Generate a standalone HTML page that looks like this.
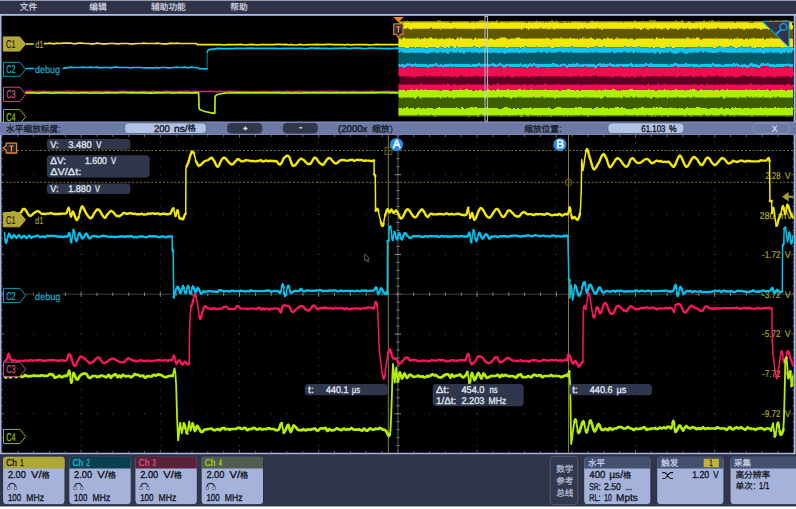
<!DOCTYPE html><html><head><meta charset="utf-8"><title>scope</title><style>html,body{margin:0;padding:0;background:#000;overflow:hidden}svg{display:block}text{font-family:"Liberation Sans","Noto Sans CJK SC",sans-serif;text-rendering:geometricPrecision}</style></head><body><svg width="796" height="509" viewBox="0 0 796 509"><defs>
<filter id="bl" x="-1%" y="-5%" width="102%" height="110%"><feTurbulence type="fractalNoise" baseFrequency="0.3 0.07" numOctaves="2" seed="4" result="n"/><feDisplacementMap in="SourceGraphic" in2="n" scale="3.2" xChannelSelector="R" yChannelSelector="G"/><feGaussianBlur stdDeviation="0.5 0.7"/></filter>
<clipPath id="mc"><rect x="1.5" y="134.9" width="792.2" height="317.85"/></clipPath>
<clipPath id="ovc"><rect x="1.7" y="16" width="792" height="105.7"/></clipPath>
</defs>
<rect x="0.00" y="0.00" width="796.00" height="509.00" fill="#abb8e4" />
<rect x="795.20" y="14.00" width="0.80" height="441.00" fill="#6a78a0" />
<rect x="0.00" y="13.90" width="796.00" height="2.00" fill="#adbbe8" />
<rect x="0.00" y="0.00" width="796.00" height="14.00" fill="#2e3349" />
<rect x="0.00" y="0.00" width="796.00" height="0.90" fill="#a9a9b3" />
<rect x="1.50" y="15.80" width="792.20" height="106.00" fill="#000" />
<rect x="0.00" y="121.80" width="796.00" height="13.00" fill="#6c7aa4" />
<rect x="1.50" y="134.90" width="792.20" height="317.85" fill="#000" />
<rect x="0.00" y="454.20" width="796.00" height="52.40" fill="#313549" />
<rect x="0.00" y="506.60" width="796.00" height="2.40" fill="#ffffff" />
<text x="19.80" y="10.30" font-size="8.7" fill="#cfd2df" text-anchor="start" stroke="#cfd2df" stroke-width="0.25" textLength="17.4" lengthAdjust="spacingAndGlyphs">文件</text>
<text x="89.30" y="10.30" font-size="8.7" fill="#cfd2df" text-anchor="start" stroke="#cfd2df" stroke-width="0.25" textLength="17.4" lengthAdjust="spacingAndGlyphs">编辑</text>
<text x="151.00" y="10.30" font-size="8.7" fill="#cfd2df" text-anchor="start" stroke="#cfd2df" stroke-width="0.25" textLength="34.8" lengthAdjust="spacingAndGlyphs">辅助功能</text>
<text x="230.20" y="10.30" font-size="8.7" fill="#cfd2df" text-anchor="start" stroke="#cfd2df" stroke-width="0.25" textLength="17.4" lengthAdjust="spacingAndGlyphs">帮助</text>
<g filter="url(#bl)">
<rect x="398.40" y="21.60" width="394.60" height="7.30" fill="#f2e900" />
<rect x="398.40" y="28.90" width="394.60" height="9.50" fill="#5f5800" />
<rect x="398.40" y="38.40" width="394.60" height="8.90" fill="#f2e900" />
<rect x="398.40" y="47.30" width="394.60" height="5.60" fill="#12c2ee" />
<rect x="398.40" y="52.90" width="394.60" height="10.80" fill="#005a6a" />
<rect x="398.40" y="63.70" width="394.60" height="3.50" fill="#12c2ee" />
<rect x="398.40" y="67.20" width="394.60" height="9.60" fill="#f20a52" />
<rect x="398.40" y="76.80" width="394.60" height="7.60" fill="#5c0022" />
<rect x="398.40" y="84.40" width="394.60" height="5.50" fill="#f20a52" />
<rect x="398.40" y="89.90" width="394.60" height="7.90" fill="#aaf000" />
<rect x="398.40" y="97.80" width="394.60" height="10.20" fill="#3c5e00" />
<rect x="398.40" y="108.00" width="394.60" height="7.70" fill="#aaf000" />
</g>
<rect x="398.40" y="21.20" width="394.60" height="1.20" fill="#8d8700" />
<rect x="398.40" y="115.20" width="394.60" height="1.20" fill="#5c8600" />
<polyline points="26.5,44.0 29.5,44.0 33.0,44.0" fill="none" stroke="#f4ea00" stroke-width="1.7" stroke-linejoin="round" stroke-linecap="round" />
<polyline points="44.5,43.6 47.5,43.5 49.6,43.2 51.7,43.5 53.8,43.8 56.8,43.2 58.9,43.5 63.1,43.2 66.1,43.2 70.3,43.2 72.4,43.5 74.5,43.8 78.7,43.2 81.7,43.2 84.7,43.5 88.9,43.5 91.0,43.8 94.0,43.8 97.0,43.2 100.0,43.5 102.1,43.8 104.2,43.8 106.3,43.8 109.3,43.5 113.5,43.5 117.7,43.8 121.9,43.5 124.9,43.5 127.9,43.5 130.0,43.8 133.0,43.8 137.2,43.5 141.4,43.5 143.5,43.2 147.7,43.5 150.7,43.5 154.9,43.5 157.0,43.2 160.0,43.5 163.0,43.8 167.2,43.8 171.4,43.2 173.5,43.5 177.7,43.2 179.8,43.5 184.0,43.5 188.2,43.5 190.3,43.5 193.3,43.5 195.4,43.5 196.0,43.5 197.5,44.7 200.5,44.7 203.5,44.7 206.5,44.7 210.7,44.7 212.8,44.7 217.0,44.7 220.0,44.7 224.2,45.0 227.2,44.7 230.2,44.7 233.2,44.7 235.3,44.7 238.3,44.7 241.3,44.4 245.5,45.0 248.5,44.7 251.5,44.4 254.5,44.7 257.5,45.0 260.5,44.7 262.6,44.7 266.8,44.7 271.0,44.7 273.1,44.7 277.3,44.4 280.3,44.4 283.3,44.7 286.3,44.4 289.3,45.0 291.4,44.4 293.5,45.0 296.5,45.0 298.6,44.7 300.7,44.4 303.7,45.0 307.9,44.7 310.9,44.7 313.9,44.7 316.0,44.4 320.2,44.7 324.4,44.7 327.4,44.4 330.4,44.4 333.4,44.7 337.6,44.7 339.7,44.7 342.7,44.7 344.8,45.0 347.8,44.4 350.8,45.0 353.8,44.7 356.8,44.7 359.8,44.7 362.8,44.7 367.0,44.7 370.0,45.0 374.2,44.7 376.3,44.4 379.3,44.7 382.3,44.7 385.3,44.7 388.3,44.7 390.4,44.7 392.5,44.7 396.7,44.7 398.4,44.7" fill="none" stroke="#f4ea00" stroke-width="1.7" stroke-linejoin="round" stroke-linecap="round" />
<polyline points="26.5,68.5 29.5,68.5 33.5,68.5" fill="none" stroke="#00c4f0" stroke-width="1.7" stroke-linejoin="round" stroke-linecap="round" />
<polyline points="63.4,68.4 66.4,67.8 68.5,67.5 71.5,67.2 73.6,67.5 76.6,67.5 79.6,67.5 82.6,67.2 86.8,67.5 91.0,67.2 94.0,67.5 97.0,67.2 100.0,67.8 104.2,67.5 108.4,67.5 111.4,67.8 114.4,67.2 116.5,67.2 119.5,67.5 122.5,67.5 124.6,67.5 127.6,67.5 130.6,67.8 133.6,67.5 137.8,67.5 139.9,67.5 144.1,67.8 148.3,67.8 151.3,67.8 154.3,67.8 156.4,67.5 159.4,67.8 161.5,67.5 164.5,67.5 168.7,67.8 170.8,67.8 172.9,67.5 177.1,67.2 179.2,67.5 182.2,67.5 184.3,67.2 188.5,67.8 190.6,67.2 194.8,67.5 197.0,67.5 199.0,68.7 207.0,68.9" fill="none" stroke="#00c4f0" stroke-width="1.7" stroke-linejoin="round" stroke-linecap="round" />
<polyline points="207.3,52.0 208.0,50.3 210.0,49.4 215.0,48.8 218.0,48.4 222.2,48.7 226.4,48.7 229.4,48.7 232.4,48.7 235.4,48.4 238.4,48.4 240.5,48.4 244.7,48.4 246.8,48.4 251.0,48.1 254.0,48.4 256.1,48.4 259.1,48.4 262.1,48.4 266.3,48.4 268.4,48.4 272.6,48.4 275.6,48.4 279.8,48.7 284.0,48.4 288.2,48.4 291.2,48.4 293.3,48.4 295.4,48.4 299.6,48.4 301.7,48.4 304.7,48.7 307.7,48.7 309.8,48.1 312.8,48.1 314.9,48.4 317.9,48.1 320.9,48.4 323.9,48.4 326.9,48.4 329.9,48.7 334.1,48.4 336.2,48.4 338.3,48.4 342.5,48.1 345.5,48.1 347.6,48.4 349.7,48.7 352.7,48.1 355.7,48.1 359.9,48.1 362.9,48.7 367.1,48.4 370.1,48.1 373.1,48.1 376.1,48.4 378.2,48.4 381.2,48.4 384.2,48.7 387.2,48.4 391.4,48.7 394.4,48.4 397.4,48.1 398.4,48.4" fill="none" stroke="#00c4f0" stroke-width="1.7" stroke-linejoin="round" stroke-linecap="round" />
<polyline points="207.0,68.9 207.3,52.0" fill="none" stroke="#00c4f0" stroke-width="0.7" stroke-linejoin="round" stroke-linecap="round" stroke-linecap="butt"/>
<polyline points="26.0,91.4 29.0,91.2 31.1,91.2 34.1,91.8 38.3,91.5 42.5,91.2 46.7,91.5 50.9,91.8 53.9,91.5 56.9,91.5 59.9,91.5 64.1,91.5 66.2,91.5 68.3,91.2 71.3,91.5 74.3,91.2 76.4,91.5 79.4,91.8 82.4,91.5 84.5,91.5 87.5,91.5 90.5,91.5 92.6,91.5 95.6,91.5 98.6,91.5 100.7,91.5 103.7,91.5 106.7,91.2 109.7,91.5 111.8,91.5 114.8,91.8 117.8,91.5 119.9,91.2 122.9,91.2 125.9,91.5 128.0,91.5 130.1,91.5 133.1,91.5 135.2,91.8 138.2,91.8 142.4,91.5 146.6,91.5 149.6,91.8 152.6,91.2 156.8,91.8 159.8,91.8 161.9,91.8 164.9,91.2 167.0,91.2 170.0,91.5 172.1,91.5 176.3,91.8 178.4,91.2 181.4,91.5 184.4,91.2 188.6,91.2 190.7,91.8 192.8,91.5 195.8,91.2 198.8,91.5 201.8,91.5 206.0,91.5 210.2,91.2 214.4,91.5 216.5,91.8 219.5,91.2 222.5,91.5 225.5,91.5 228.5,91.2 232.7,91.2 236.9,91.5 239.0,91.5 243.2,91.5 246.2,91.5 250.4,91.5 252.5,91.8 255.5,91.5 257.6,91.5 259.7,91.5 263.9,91.2 268.1,91.5 272.3,91.5 275.3,91.2 277.4,91.5 280.4,91.5 283.4,91.8 286.4,91.2 289.4,91.5 293.6,91.5 297.8,91.2 300.8,91.2 305.0,91.5 309.2,91.5 312.2,91.5 315.2,91.5 318.2,91.2 321.2,91.2 324.2,91.5 328.4,91.2 331.4,91.2 334.4,91.5 337.4,91.2 341.6,91.5 343.7,91.5 347.9,91.5 350.0,91.5 352.1,91.2 355.1,91.5 358.1,91.5 362.3,91.8 365.3,91.5 368.3,91.5 370.4,91.5 373.4,91.2 375.5,91.5 379.7,91.8 382.7,91.5 386.9,91.2 389.9,91.5 394.1,91.5 397.1,91.5 398.4,91.5" fill="none" stroke="#ff1464" stroke-width="1.5" stroke-linejoin="round" stroke-linecap="round" />
<polyline points="26.0,92.9 29.0,92.9 32.0,92.9 35.0,92.9 39.2,93.2 43.4,92.6 46.4,92.9 48.5,92.9 52.7,93.2 55.7,92.9 58.7,92.9 62.9,92.9 65.9,92.9 68.0,92.9 71.0,93.2 73.1,92.9 76.1,92.9 79.1,93.2 82.1,92.6 86.3,92.9 90.5,93.2 93.5,92.9 96.5,92.9 98.6,92.9 101.6,93.2 104.6,92.9 107.6,92.6 110.6,92.9 114.8,92.9 119.0,92.9 122.0,92.6 125.0,92.6 129.2,92.9 133.4,92.6 135.5,92.9 139.7,92.9 142.7,92.6 145.7,92.9 148.7,93.2 150.8,92.9 152.9,93.2 155.0,92.6 158.0,92.9 160.1,92.9 163.1,92.9 167.3,92.6 169.4,92.6 172.4,93.2 175.4,92.9 178.4,92.9 180.5,92.6 183.5,92.9 186.5,92.9 189.5,92.9 192.5,93.2 195.5,92.6 198.6,92.9 199.1,108.0 200.0,109.8 205.0,111.5 210.0,112.6 214.8,113.4 215.1,97.0 216.0,95.2 219.0,94.0 225.0,93.2 228.0,92.9 230.1,92.6 233.1,92.9 237.3,92.6 240.3,92.9 244.5,92.9 247.5,92.9 249.6,92.9 253.8,92.9 258.0,92.9 260.1,92.9 262.2,92.9 266.4,92.9 269.4,92.9 272.4,92.9 275.4,92.9 278.4,92.6 282.6,93.2 285.6,92.9 289.8,92.9 291.9,93.2 294.9,92.9 297.0,92.9 299.1,93.2 302.1,92.9 304.2,92.6 307.2,92.9 311.4,92.9 313.5,92.6 316.5,92.9 319.5,92.9 323.7,92.6 326.7,92.9 329.7,92.9 333.9,92.9 336.0,92.6 338.1,92.9 340.2,92.9 344.4,92.6 347.4,92.9 350.4,92.9 354.6,92.6 356.7,92.9 359.7,92.9 363.9,92.9 366.9,92.9 371.1,92.6 375.3,92.9 379.5,92.6 383.7,92.6 387.9,92.6 390.0,92.9 393.0,92.6 396.0,92.9 398.4,92.9" fill="none" stroke="#b4f000" stroke-width="1.7" stroke-linejoin="round" stroke-linecap="round" />
<text x="35.30" y="47.70" font-size="10.3" fill="#b9ad1c" text-anchor="start"  stroke="#b9ad1c" stroke-width="0.15" textLength="8.1" lengthAdjust="spacingAndGlyphs">d1</text>
<text x="35.00" y="73.30" font-size="10.3" fill="#1fb4d6" text-anchor="start"  stroke="#1fb4d6" stroke-width="0.15" textLength="25.1" lengthAdjust="spacingAndGlyphs">debug</text>
<path d="M3.3,36.9 H19.7 L25.5,44.0 L19.7,51.1 H3.3 Z" fill="#b3a837" stroke="#b3a837" stroke-width="1"/>
<text x="6.10" y="48.10" font-size="11.3" fill="#1d1b08" text-anchor="start"  stroke="#1d1b08" stroke-width="0.2" textLength="9.4" lengthAdjust="spacingAndGlyphs">C1</text>
<path d="M3.5,62.3 H19.9 L25.7,69.3 L19.9,76.3 H3.5 Z" fill="#000" stroke="#0a9cba" stroke-width="1"/>
<text x="6.30" y="73.45" font-size="11.3" fill="#12b4d6" text-anchor="start"  stroke="#12b4d6" stroke-width="0.2" textLength="9.4" lengthAdjust="spacingAndGlyphs">C2</text>
<path d="M3.5,87.2 H19.9 L25.7,94.3 L19.9,101.4 H3.5 Z" fill="#000" stroke="#cf4b78" stroke-width="1"/>
<text x="6.30" y="98.45" font-size="11.3" fill="#d85885" text-anchor="start"  stroke="#d85885" stroke-width="0.2" textLength="9.4" lengthAdjust="spacingAndGlyphs">C3</text>
<g clip-path="url(#ovc)">
<path d="M3.5,109.6 H19.9 L25.7,116.7 L19.9,123.8 H3.5 Z" fill="#000" stroke="#8fbc00" stroke-width="1"/>
<text x="6.30" y="120.80" font-size="11.3" fill="#9ccc00" text-anchor="start"  stroke="#9ccc00" stroke-width="0.2" textLength="9.4" lengthAdjust="spacingAndGlyphs">C4</text>
</g>
<rect x="485.00" y="16.60" width="2.60" height="104.60" fill="none" stroke="#c9cbd6" stroke-width="0.9"/>
<path d="M393.3,17.1 H403.7 L398.5,22.2 Z" fill="#f08a1e"/>
<path d="M393.7,23.8 H403 V34.4 H400.6 L398.4,37.6 L396.2,34.4 H393.7 Z" fill="#2a2b3e" stroke="#dc7c20" stroke-width="1.2" stroke-linejoin="round"/>
<path d="M396.2,26.8 H400.7 M398.45,26.8 V32.2" stroke="#f0902a" stroke-width="1.2" fill="none"/>
<path d="M762.3,21.4 H789 V47.2 Z" fill="#2f3449" stroke="#2196dc" stroke-width="1.1" stroke-linejoin="round"/>
<circle cx="783.4" cy="26.9" r="3.4" fill="none" stroke="#2196dc" stroke-width="1.5"/>
<line x1="780.70" y1="29.70" x2="776.00" y2="34.30" stroke="#2196dc" stroke-width="2" stroke-linecap="round"/>
<rect x="0.00" y="121.80" width="796.00" height="0.80" fill="#8c9bc8" />
<rect x="0.00" y="134.10" width="796.00" height="0.70" fill="#8090bc" />
<text x="6.00" y="131.70" font-size="8.72" fill="#14151e" text-anchor="start" stroke="#14151e" stroke-width="0.25" textLength="52.3" lengthAdjust="spacingAndGlyphs">水平缩放标度</text>
<text x="58.60" y="131.50" font-size="9.7" fill="#14151e" text-anchor="start"  stroke="#14151e" stroke-width="0.35" textLength="2.0" lengthAdjust="spacingAndGlyphs">:</text>
<rect x="124.60" y="122.90" width="81.80" height="10.60" fill="#b1c4e5" rx="4" stroke="#4c5470" stroke-width="0.7"/>
<text x="153.90" y="131.50" font-size="9.7" fill="#14151e" text-anchor="start"  stroke="#14151e" stroke-width="0.35" textLength="15.9" lengthAdjust="spacingAndGlyphs">200</text>
<text x="173.90" y="131.50" font-size="9.7" fill="#14151e" text-anchor="start"  stroke="#14151e" stroke-width="0.35" textLength="13.8" lengthAdjust="spacingAndGlyphs">ns/</text>
<text x="187.60" y="131.40" font-size="8.4" fill="#14151e" text-anchor="start" stroke="#14151e" stroke-width="0.25">格</text>
<rect x="227.20" y="123.00" width="35.10" height="10.40" fill="#30364c" rx="4" stroke="#4c5470" stroke-width="0.6"/>
<rect x="282.90" y="123.00" width="35.00" height="10.40" fill="#30364c" rx="4" stroke="#4c5470" stroke-width="0.6"/>
<path d="M243.3,128.5 h4.2 M245.4,126.4 v4.2" stroke="#e2e4ee" stroke-width="1.3" fill="none"/>
<path d="M299.2,127.8 h3" stroke="#e2e4ee" stroke-width="1.3" fill="none"/>
<text x="338.00" y="131.50" font-size="9.7" fill="#14151e" text-anchor="start"  stroke="#14151e" stroke-width="0.35" textLength="29.4" lengthAdjust="spacingAndGlyphs">(2000x</text>
<text x="372.00" y="131.60" font-size="8.8" fill="#14151e" text-anchor="start" stroke="#14151e" stroke-width="0.25" textLength="17.6" lengthAdjust="spacingAndGlyphs">缩放</text>
<text x="389.80" y="131.50" font-size="9.7" fill="#14151e" text-anchor="start" >)</text>
<text x="524.20" y="131.70" font-size="8.7" fill="#14151e" text-anchor="start" stroke="#14151e" stroke-width="0.25" textLength="34.8" lengthAdjust="spacingAndGlyphs">缩放位置</text>
<text x="559.40" y="131.50" font-size="9.7" fill="#14151e" text-anchor="start"  stroke="#14151e" stroke-width="0.35" textLength="2.0" lengthAdjust="spacingAndGlyphs">:</text>
<rect x="607.80" y="122.90" width="76.20" height="10.60" fill="#b1c4e5" rx="4" stroke="#4c5470" stroke-width="0.7"/>
<text x="641.30" y="131.50" font-size="9.7" fill="#14151e" text-anchor="start"  stroke="#14151e" stroke-width="0.35" textLength="24.2" lengthAdjust="spacingAndGlyphs">61.103</text>
<text x="669.00" y="131.50" font-size="9.7" fill="#14151e" text-anchor="start"  stroke="#14151e" stroke-width="0.35" textLength="7.6" lengthAdjust="spacingAndGlyphs">%</text>
<rect x="753.60" y="123.00" width="35.70" height="10.40" fill="none" rx="4.5" stroke="#8b97bd" stroke-width="0.9"/>
<text x="774.60" y="131.80" font-size="9.4" fill="#eef0f8" text-anchor="middle" >X</text>
<g clip-path="url(#mc)">
<line x1="81.14" y1="134.30" x2="81.14" y2="454.10" stroke="#4a4a4a" stroke-width="1" stroke-dasharray="1 6.970"/>
<line x1="160.33" y1="134.30" x2="160.33" y2="454.10" stroke="#4a4a4a" stroke-width="1" stroke-dasharray="1 6.970"/>
<line x1="239.52" y1="134.30" x2="239.52" y2="454.10" stroke="#4a4a4a" stroke-width="1" stroke-dasharray="1 6.970"/>
<line x1="318.71" y1="134.30" x2="318.71" y2="454.10" stroke="#4a4a4a" stroke-width="1" stroke-dasharray="1 6.970"/>
<line x1="477.09" y1="134.30" x2="477.09" y2="454.10" stroke="#4a4a4a" stroke-width="1" stroke-dasharray="1 6.970"/>
<line x1="556.28" y1="134.30" x2="556.28" y2="454.10" stroke="#4a4a4a" stroke-width="1" stroke-dasharray="1 6.970"/>
<line x1="635.47" y1="134.30" x2="635.47" y2="454.10" stroke="#4a4a4a" stroke-width="1" stroke-dasharray="1 6.970"/>
<line x1="714.66" y1="134.30" x2="714.66" y2="454.10" stroke="#4a4a4a" stroke-width="1" stroke-dasharray="1 6.970"/>
<line x1="1.45" y1="174.65" x2="794.35" y2="174.65" stroke="#4a4a4a" stroke-width="1" stroke-dasharray="1 14.838"/>
<line x1="1.45" y1="214.50" x2="794.35" y2="214.50" stroke="#4a4a4a" stroke-width="1" stroke-dasharray="1 14.838"/>
<line x1="1.45" y1="254.35" x2="794.35" y2="254.35" stroke="#4a4a4a" stroke-width="1" stroke-dasharray="1 14.838"/>
<line x1="1.45" y1="334.05" x2="794.35" y2="334.05" stroke="#4a4a4a" stroke-width="1" stroke-dasharray="1 14.838"/>
<line x1="1.45" y1="373.90" x2="794.35" y2="373.90" stroke="#4a4a4a" stroke-width="1" stroke-dasharray="1 14.838"/>
<line x1="1.45" y1="413.75" x2="794.35" y2="413.75" stroke="#4a4a4a" stroke-width="1" stroke-dasharray="1 14.838"/>
<line x1="397.90" y1="134.80" x2="397.90" y2="453.60" stroke="#6e6e6e" stroke-width="0.85" />
<path d="M394.7,134.8L401.1,134.8M394.7,174.7L401.1,174.7M394.7,214.5L401.1,214.5M394.7,254.4L401.1,254.4M394.7,294.2L401.1,294.2M394.7,334.1L401.1,334.1M394.7,373.9L401.1,373.9M394.7,413.8L401.1,413.8M394.7,453.6L401.1,453.6" stroke="#909090" stroke-width="1" fill="none"/>
<path d="M396.1,142.8L399.7,142.8M396.1,150.7L399.7,150.7M396.1,158.7L399.7,158.7M396.1,166.7L399.7,166.7M396.1,182.6L399.7,182.6M396.1,190.6L399.7,190.6M396.1,198.6L399.7,198.6M396.1,206.5L399.7,206.5M396.1,222.5L399.7,222.5M396.1,230.4L399.7,230.4M396.1,238.4L399.7,238.4M396.1,246.4L399.7,246.4M396.1,262.3L399.7,262.3M396.1,270.3L399.7,270.3M396.1,278.3L399.7,278.3M396.1,286.2L399.7,286.2M396.1,302.2L399.7,302.2M396.1,310.1L399.7,310.1M396.1,318.1L399.7,318.1M396.1,326.1L399.7,326.1M396.1,342.0L399.7,342.0M396.1,350.0L399.7,350.0M396.1,358.0L399.7,358.0M396.1,365.9L399.7,365.9M396.1,381.9L399.7,381.9M396.1,389.8L399.7,389.8M396.1,397.8L399.7,397.8M396.1,405.8L399.7,405.8M396.1,421.7L399.7,421.7M396.1,429.7L399.7,429.7M396.1,437.7L399.7,437.7M396.1,445.6L399.7,445.6" stroke="#747474" stroke-width="1" fill="none"/>
<line x1="1.95" y1="294.20" x2="793.85" y2="294.20" stroke="#444444" stroke-width="0.9" />
<path d="M1.9,291.6L1.9,296.8M17.8,292.6L17.8,295.8M33.6,292.6L33.6,295.8M49.5,292.6L49.5,295.8M65.3,292.6L65.3,295.8M81.1,291.6L81.1,296.8M97.0,292.6L97.0,295.8M112.8,292.6L112.8,295.8M128.7,292.6L128.7,295.8M144.5,292.6L144.5,295.8M160.3,291.6L160.3,296.8M176.2,292.6L176.2,295.8M192.0,292.6L192.0,295.8M207.8,292.6L207.8,295.8M223.7,292.6L223.7,295.8M239.5,291.6L239.5,296.8M255.4,292.6L255.4,295.8M271.2,292.6L271.2,295.8M287.0,292.6L287.0,295.8M302.9,292.6L302.9,295.8M318.7,291.6L318.7,296.8M334.5,292.6L334.5,295.8M350.4,292.6L350.4,295.8M366.2,292.6L366.2,295.8M382.1,292.6L382.1,295.8M397.9,291.6L397.9,296.8M413.7,292.6L413.7,295.8M429.6,292.6L429.6,295.8M445.4,292.6L445.4,295.8M461.3,292.6L461.3,295.8M477.1,291.6L477.1,296.8M492.9,292.6L492.9,295.8M508.8,292.6L508.8,295.8M524.6,292.6L524.6,295.8M540.4,292.6L540.4,295.8M556.3,291.6L556.3,296.8M572.1,292.6L572.1,295.8M588.0,292.6L588.0,295.8M603.8,292.6L603.8,295.8M619.6,292.6L619.6,295.8M635.5,291.6L635.5,296.8M651.3,292.6L651.3,295.8M667.1,292.6L667.1,295.8M683.0,292.6L683.0,295.8M698.8,292.6L698.8,295.8M714.7,291.6L714.7,296.8M730.5,292.6L730.5,295.8M746.3,292.6L746.3,295.8M762.2,292.6L762.2,295.8M778.0,292.6L778.0,295.8M793.9,291.6L793.9,296.8" stroke="#8a8a8a" stroke-width="1" fill="none"/>
<path d="M1.9,134.9L1.9,137.5M1.9,450.1L1.9,452.8M17.8,134.9L17.8,136.8M17.8,450.9L17.8,452.8M33.6,134.9L33.6,136.8M33.6,450.9L33.6,452.8M49.5,134.9L49.5,136.8M49.5,450.9L49.5,452.8M65.3,134.9L65.3,136.8M65.3,450.9L65.3,452.8M81.1,134.9L81.1,137.5M81.1,450.1L81.1,452.8M97.0,134.9L97.0,136.8M97.0,450.9L97.0,452.8M112.8,134.9L112.8,136.8M112.8,450.9L112.8,452.8M128.7,134.9L128.7,136.8M128.7,450.9L128.7,452.8M144.5,134.9L144.5,136.8M144.5,450.9L144.5,452.8M160.3,134.9L160.3,137.5M160.3,450.1L160.3,452.8M176.2,134.9L176.2,136.8M176.2,450.9L176.2,452.8M192.0,134.9L192.0,136.8M192.0,450.9L192.0,452.8M207.8,134.9L207.8,136.8M207.8,450.9L207.8,452.8M223.7,134.9L223.7,136.8M223.7,450.9L223.7,452.8M239.5,134.9L239.5,137.5M239.5,450.1L239.5,452.8M255.4,134.9L255.4,136.8M255.4,450.9L255.4,452.8M271.2,134.9L271.2,136.8M271.2,450.9L271.2,452.8M287.0,134.9L287.0,136.8M287.0,450.9L287.0,452.8M302.9,134.9L302.9,136.8M302.9,450.9L302.9,452.8M318.7,134.9L318.7,137.5M318.7,450.1L318.7,452.8M334.5,134.9L334.5,136.8M334.5,450.9L334.5,452.8M350.4,134.9L350.4,136.8M350.4,450.9L350.4,452.8M366.2,134.9L366.2,136.8M366.2,450.9L366.2,452.8M382.1,134.9L382.1,136.8M382.1,450.9L382.1,452.8M397.9,134.9L397.9,137.5M397.9,450.1L397.9,452.8M413.7,134.9L413.7,136.8M413.7,450.9L413.7,452.8M429.6,134.9L429.6,136.8M429.6,450.9L429.6,452.8M445.4,134.9L445.4,136.8M445.4,450.9L445.4,452.8M461.3,134.9L461.3,136.8M461.3,450.9L461.3,452.8M477.1,134.9L477.1,137.5M477.1,450.1L477.1,452.8M492.9,134.9L492.9,136.8M492.9,450.9L492.9,452.8M508.8,134.9L508.8,136.8M508.8,450.9L508.8,452.8M524.6,134.9L524.6,136.8M524.6,450.9L524.6,452.8M540.4,134.9L540.4,136.8M540.4,450.9L540.4,452.8M556.3,134.9L556.3,137.5M556.3,450.1L556.3,452.8M572.1,134.9L572.1,136.8M572.1,450.9L572.1,452.8M588.0,134.9L588.0,136.8M588.0,450.9L588.0,452.8M603.8,134.9L603.8,136.8M603.8,450.9L603.8,452.8M619.6,134.9L619.6,136.8M619.6,450.9L619.6,452.8M635.5,134.9L635.5,137.5M635.5,450.1L635.5,452.8M651.3,134.9L651.3,136.8M651.3,450.9L651.3,452.8M667.1,134.9L667.1,136.8M667.1,450.9L667.1,452.8M683.0,134.9L683.0,136.8M683.0,450.9L683.0,452.8M698.8,134.9L698.8,136.8M698.8,450.9L698.8,452.8M714.7,134.9L714.7,137.5M714.7,450.1L714.7,452.8M730.5,134.9L730.5,136.8M730.5,450.9L730.5,452.8M746.3,134.9L746.3,136.8M746.3,450.9L746.3,452.8M762.2,134.9L762.2,136.8M762.2,450.9L762.2,452.8M778.0,134.9L778.0,136.8M778.0,450.9L778.0,452.8M793.9,134.9L793.9,137.5M793.9,450.1L793.9,452.8M1.5,134.8L3.9,134.8M791.3,134.8L793.7,134.8M1.5,142.8L2.9,142.8M792.3,142.8L793.7,142.8M1.5,150.7L2.9,150.7M792.3,150.7L793.7,150.7M1.5,158.7L2.9,158.7M792.3,158.7L793.7,158.7M1.5,166.7L2.9,166.7M792.3,166.7L793.7,166.7M1.5,174.7L3.9,174.7M791.3,174.7L793.7,174.7M1.5,182.6L2.9,182.6M792.3,182.6L793.7,182.6M1.5,190.6L2.9,190.6M792.3,190.6L793.7,190.6M1.5,198.6L2.9,198.6M792.3,198.6L793.7,198.6M1.5,206.5L2.9,206.5M792.3,206.5L793.7,206.5M1.5,214.5L3.9,214.5M791.3,214.5L793.7,214.5M1.5,222.5L2.9,222.5M792.3,222.5L793.7,222.5M1.5,230.4L2.9,230.4M792.3,230.4L793.7,230.4M1.5,238.4L2.9,238.4M792.3,238.4L793.7,238.4M1.5,246.4L2.9,246.4M792.3,246.4L793.7,246.4M1.5,254.4L3.9,254.4M791.3,254.4L793.7,254.4M1.5,262.3L2.9,262.3M792.3,262.3L793.7,262.3M1.5,270.3L2.9,270.3M792.3,270.3L793.7,270.3M1.5,278.3L2.9,278.3M792.3,278.3L793.7,278.3M1.5,286.2L2.9,286.2M792.3,286.2L793.7,286.2M1.5,294.2L3.9,294.2M791.3,294.2L793.7,294.2M1.5,302.2L2.9,302.2M792.3,302.2L793.7,302.2M1.5,310.1L2.9,310.1M792.3,310.1L793.7,310.1M1.5,318.1L2.9,318.1M792.3,318.1L793.7,318.1M1.5,326.1L2.9,326.1M792.3,326.1L793.7,326.1M1.5,334.1L3.9,334.1M791.3,334.1L793.7,334.1M1.5,342.0L2.9,342.0M792.3,342.0L793.7,342.0M1.5,350.0L2.9,350.0M792.3,350.0L793.7,350.0M1.5,358.0L2.9,358.0M792.3,358.0L793.7,358.0M1.5,365.9L2.9,365.9M792.3,365.9L793.7,365.9M1.5,373.9L3.9,373.9M791.3,373.9L793.7,373.9M1.5,381.9L2.9,381.9M792.3,381.9L793.7,381.9M1.5,389.8L2.9,389.8M792.3,389.8L793.7,389.8M1.5,397.8L2.9,397.8M792.3,397.8L793.7,397.8M1.5,405.8L2.9,405.8M792.3,405.8L793.7,405.8M1.5,413.8L3.9,413.8M791.3,413.8L793.7,413.8M1.5,421.7L2.9,421.7M792.3,421.7L793.7,421.7M1.5,429.7L2.9,429.7M792.3,429.7L793.7,429.7M1.5,437.7L2.9,437.7M792.3,437.7L793.7,437.7M1.5,445.6L2.9,445.6M792.3,445.6L793.7,445.6M1.5,453.6L3.9,453.6M791.3,453.6L793.7,453.6" stroke="#6c6c6c" stroke-width="1" fill="none"/>
<line x1="1.95" y1="150.50" x2="793.85" y2="150.50" stroke="#939024" stroke-width="0.85" stroke-dasharray="1.9 1.93"/>
<line x1="1.95" y1="182.30" x2="793.85" y2="182.30" stroke="#939024" stroke-width="0.85" stroke-dasharray="1.9 1.93"/>
<line x1="388.30" y1="134.80" x2="388.30" y2="453.60" stroke="#887d1c" stroke-width="1" />
<line x1="568.50" y1="134.80" x2="568.50" y2="453.60" stroke="#887d1c" stroke-width="1" />
</g>
<text x="765.40" y="178.90" font-size="9.8" fill="#b8ac2e" text-anchor="start"  stroke="#b8ac2e" stroke-width="0.15" textLength="15.2" lengthAdjust="spacingAndGlyphs">2.28</text>
<text x="784.80" y="178.90" font-size="9.8" fill="#b8ac2e" text-anchor="start"  stroke="#b8ac2e" stroke-width="0.15" textLength="5.9" lengthAdjust="spacingAndGlyphs">V</text>
<text x="762.00" y="258.30" font-size="9.8" fill="#b8ac2e" text-anchor="start"  stroke="#b8ac2e" stroke-width="0.15" textLength="18.6" lengthAdjust="spacingAndGlyphs">-1.72</text>
<text x="784.80" y="258.30" font-size="9.8" fill="#b8ac2e" text-anchor="start"  stroke="#b8ac2e" stroke-width="0.15" textLength="5.9" lengthAdjust="spacingAndGlyphs">V</text>
<text x="762.00" y="297.80" font-size="9.8" fill="#b8ac2e" text-anchor="start"  stroke="#b8ac2e" stroke-width="0.15" textLength="18.6" lengthAdjust="spacingAndGlyphs">-3.72</text>
<text x="784.80" y="297.80" font-size="9.8" fill="#b8ac2e" text-anchor="start"  stroke="#b8ac2e" stroke-width="0.15" textLength="5.9" lengthAdjust="spacingAndGlyphs">V</text>
<text x="762.00" y="337.40" font-size="9.8" fill="#b8ac2e" text-anchor="start"  stroke="#b8ac2e" stroke-width="0.15" textLength="18.6" lengthAdjust="spacingAndGlyphs">-5.72</text>
<text x="784.80" y="337.40" font-size="9.8" fill="#b8ac2e" text-anchor="start"  stroke="#b8ac2e" stroke-width="0.15" textLength="5.9" lengthAdjust="spacingAndGlyphs">V</text>
<text x="762.00" y="377.00" font-size="9.8" fill="#b8ac2e" text-anchor="start"  stroke="#b8ac2e" stroke-width="0.15" textLength="18.6" lengthAdjust="spacingAndGlyphs">-7.72</text>
<text x="784.80" y="377.00" font-size="9.8" fill="#b8ac2e" text-anchor="start"  stroke="#b8ac2e" stroke-width="0.15" textLength="5.9" lengthAdjust="spacingAndGlyphs">V</text>
<text x="762.00" y="416.60" font-size="9.8" fill="#b8ac2e" text-anchor="start"  stroke="#b8ac2e" stroke-width="0.15" textLength="18.6" lengthAdjust="spacingAndGlyphs">-9.72</text>
<text x="784.80" y="416.60" font-size="9.8" fill="#b8ac2e" text-anchor="start"  stroke="#b8ac2e" stroke-width="0.15" textLength="5.9" lengthAdjust="spacingAndGlyphs">V</text>
<text x="759.40" y="218.70" font-size="9.8" fill="#b8ac2e" text-anchor="start"  stroke="#b8ac2e" stroke-width="0.15" textLength="15.2" lengthAdjust="spacingAndGlyphs">280</text>
<text x="778.00" y="218.70" font-size="9.8" fill="#b8ac2e" text-anchor="start"  stroke="#b8ac2e" stroke-width="0.15" textLength="15" lengthAdjust="spacingAndGlyphs">mV</text>
<g clip-path="url(#mc)">
<polyline points="5.0,360.7 6.0,360.2 7.0,359.1 7.8,355.8 8.6,353.6 9.6,356.1 10.5,359.1 11.2,359.9 12.0,360.7 13.0,360.5 14.0,360.3 14.7,360.3 15.4,360.3 16.4,360.9 17.4,361.4 18.3,360.8 19.3,360.5 20.2,360.9 21.2,360.9 22.2,360.9 23.1,360.9 24.1,360.9 25.0,360.4 25.7,360.4 26.4,360.4 27.4,360.7 28.4,361.0 29.4,360.7 30.4,360.0 31.4,360.2 32.4,361.0 33.1,360.7 33.8,360.4 34.8,360.4 35.8,360.4 36.7,360.4 37.7,360.4 38.6,360.0 39.5,360.0 40.5,360.0 41.4,360.4 42.4,360.4 43.4,360.9 44.1,360.9 44.8,360.9 45.7,360.9 46.7,360.4 47.6,360.4 48.6,360.1 49.6,359.9 50.6,360.1 51.6,360.4 52.3,360.0 53.0,360.0 54.0,360.0 55.0,360.4 55.9,360.4 56.9,360.4 57.8,360.9 58.5,361.1 59.2,360.5 60.2,360.3 61.2,360.4 62.2,360.1 63.2,360.3 63.9,360.6 64.6,360.9 65.3,360.9 66.0,360.9 66.8,359.9 67.6,357.7 68.4,355.1 69.2,354.1 70.1,354.5 71.0,356.7 71.9,360.1 72.8,362.9 73.7,365.1 74.6,366.0 75.5,365.9 76.4,363.6 77.3,361.7 78.3,360.1 79.2,358.2 80.1,356.8 81.0,356.3 82.0,356.9 83.0,357.5 83.9,357.8 84.9,358.7 85.9,359.8 86.9,360.8 87.9,361.7 88.8,362.5 89.8,363.5 90.8,362.8 91.8,362.5 92.7,361.8 93.7,361.4 94.6,360.3 95.5,359.2 96.5,358.3 97.5,357.6 98.4,357.4 99.3,357.8 100.2,358.9 101.1,360.3 102.0,361.7 102.9,362.8 103.8,363.2 104.8,363.0 105.7,362.6 106.7,362.0 107.6,361.3 108.6,360.5 109.5,359.8 110.5,359.2 111.4,358.8 112.4,358.6 113.4,358.7 114.4,358.9 115.3,359.8 116.3,360.3 117.3,360.8 118.3,361.3 119.3,361.8 120.3,362.3 121.2,362.7 122.2,362.1 123.2,362.2 124.1,362.3 125.0,361.4 125.9,359.9 126.8,359.3 127.7,358.4 128.6,358.1 129.5,358.7 130.4,359.2 131.2,359.8 132.1,359.9 133.0,360.4 134.0,360.9 135.0,360.7 135.7,361.3 136.4,361.1 137.4,361.1 138.4,361.1 139.4,360.3 140.4,360.1 141.4,360.3 142.4,360.6 143.4,360.9 144.4,361.2 145.4,360.9 146.4,360.6 147.3,360.6 148.3,360.6 149.2,360.6 149.9,360.6 150.6,360.6 151.6,361.1 152.6,361.1 153.6,360.6 154.6,360.6 155.6,360.6 156.6,360.2 157.6,360.2 158.6,360.2 159.6,359.9 160.6,360.5 161.5,360.6 162.5,360.5 163.4,360.6 164.3,360.2 165.3,360.2 166.2,360.2 167.2,360.6 168.2,361.1 168.9,360.2 169.6,360.2 170.6,360.2 171.6,360.2 172.3,359.8 173.1,357.5 173.8,355.4 174.7,357.4" fill="none" stroke="#ff1464" stroke-width="2.3" stroke-linejoin="round" stroke-linecap="round" />
<polyline points="175.5,361.3 176.4,363.8 177.3,363.0 178.3,361.0 179.2,360.2 180.0,360.8 180.8,362.6 181.6,364.0 182.4,364.6 183.3,363.8 184.1,362.4 185.0,361.6 185.9,362.5 186.9,364.0 187.8,364.5 188.5,364.2 189.2,363.2" fill="none" stroke="#ff1464" stroke-width="2.3" stroke-linejoin="round" stroke-linecap="round" />
<polyline points="191.0,306.6 191.8,304.9 192.5,303.2 193.3,299.7" fill="none" stroke="#ff1464" stroke-width="2.3" stroke-linejoin="round" stroke-linecap="round" />
<polyline points="194.2,295.6 195.0,293.6 196.0,296.7" fill="none" stroke="#ff1464" stroke-width="2.3" stroke-linejoin="round" stroke-linecap="round" />
<polyline points="199.4,316.7 200.2,319.1 201.0,317.9 201.7,314.5 202.5,311.6 203.4,309.2 204.2,307.0 205.1,306.1 206.1,306.7 207.0,308.0 208.0,308.6 209.0,308.6 210.0,308.6 211.0,308.9 212.0,309.2 213.0,308.6 214.0,308.1 215.0,308.6 216.0,309.2 216.7,309.2 217.4,309.2 218.4,308.9 219.4,308.6 220.4,308.6 221.4,308.6 222.0,308.6 222.9,307.8 223.8,306.9 224.8,306.9 225.7,306.6 226.5,306.5 227.3,307.4 228.2,308.8 229.0,309.2 230.0,309.2 231.0,308.8 231.7,308.8 232.4,308.8 233.2,308.8 234.0,309.2 234.9,308.8 235.8,307.6 236.7,306.1 237.6,306.1 238.4,306.1 239.3,307.1 240.2,308.1 241.0,308.6 242.0,308.6 243.0,308.6 244.0,308.6 245.0,308.6 245.7,308.6 246.4,308.6 247.4,309.1 248.4,309.1 249.1,308.6 249.8,308.6 250.5,308.6 251.2,308.6 252.1,308.6 253.1,308.6 254.0,308.6 255.0,308.9 256.0,309.2 256.7,308.9 257.4,308.2 258.4,307.8 259.4,307.6 260.4,308.6 261.4,309.6 262.1,308.6 262.8,308.1 263.5,308.6 264.2,309.6 265.2,308.9 266.2,308.6 266.9,308.6 267.6,308.6 268.6,309.3 269.6,309.6 270.3,308.9 271.0,308.6 271.7,309.1 272.4,309.1 273.4,308.6 274.4,308.6 275.1,308.2 275.8,308.6 276.7,308.6 277.6,308.6 278.5,308.6 279.3,309.6 280.0,311.6 280.8,312.6 281.5,310.8 282.3,307.3 283.0,305.5 283.9,305.5 284.8,305.5 285.7,305.5 286.6,305.9 287.5,305.9 288.4,305.9 289.3,306.6 290.1,307.8 291.0,309.8 291.8,311.4 292.7,312.1 293.6,311.8 294.4,311.1 295.3,310.2 296.1,309.3 297.0,308.6 297.9,308.0 298.8,307.0 299.7,306.5 300.6,306.1 301.5,306.2 302.4,306.1 303.3,306.6 304.1,307.7 305.0,309.1 305.9,309.7 306.8,309.9 307.7,310.4 308.6,310.6 309.6,310.1 310.5,308.8 311.5,307.4 312.4,306.1 313.4,305.6 314.3,305.6 315.2,306.5 316.1,307.5 317.0,309.1 318.0,309.3 319.0,308.5 320.0,308.2 321.0,308.0 321.7,308.0 322.4,308.4 323.1,308.1 323.8,307.4 324.8,307.7 325.8,308.0 326.7,308.0 327.7,308.0 328.6,308.4 329.5,308.3 330.5,308.0 331.4,307.9 332.1,308.6 332.8,308.9 333.8,308.6 334.8,308.3 335.7,307.7 336.7,308.2 337.6,308.5 338.6,308.3 339.6,308.4 340.3,308.1 341.0,307.9 342.0,308.1 343.0,308.4 344.0,309.2 345.0,309.4 345.7,308.2 346.4,308.0 347.4,308.9 348.4,308.9 349.4,309.1 350.4,309.4 351.4,308.5 352.4,309.0 353.4,308.7 354.4,308.4 355.4,308.4 356.4,308.4 357.1,308.4 357.8,308.4 358.7,308.5 359.7,308.8 360.6,309.0 361.6,308.7 362.6,308.4 363.6,308.4 364.6,308.4 365.6,308.1 366.6,308.3 367.5,307.4 368.5,307.4 369.4,307.4 370.4,307.7 371.4,308.0 372.1,308.0 372.8,308.0 373.5,308.9 374.2,307.1" fill="none" stroke="#ff1464" stroke-width="2.3" stroke-linejoin="round" stroke-linecap="round" />
<polyline points="375.0,303.5 375.7,301.8 376.4,302.9 377.1,305.4" fill="none" stroke="#ff1464" stroke-width="2.3" stroke-linejoin="round" stroke-linecap="round" />
<polyline points="383.0,376.7 383.9,378.8 384.8,375.6" fill="none" stroke="#ff1464" stroke-width="2.3" stroke-linejoin="round" stroke-linecap="round" />
<polyline points="388.1,354.0 388.9,350.7 389.7,349.4 390.5,350.7 391.4,353.7 392.2,356.8 393.0,358.4 394.0,358.7 395.0,358.4 396.0,358.7 396.9,360.0 397.8,361.6 398.6,363.1 399.5,363.8 400.4,363.4 401.2,362.8 402.1,361.5 403.0,360.6 404.0,359.7 405.0,358.3 406.0,357.7 407.0,357.4 408.0,357.9 409.0,359.4 410.0,360.6 411.0,360.2 412.0,360.2 413.0,360.2 413.7,359.9 414.4,360.1 415.4,360.1 416.4,360.1 417.1,360.6 417.8,361.2 418.8,361.2 419.8,361.2 420.8,360.9 421.8,360.6 422.8,360.6 423.8,360.6 424.8,360.6 425.8,360.6 426.5,360.6 427.2,361.1 428.2,361.1 429.2,361.1 430.1,361.1 431.1,360.2 432.0,360.2 433.0,360.2 434.0,360.6 434.9,360.6 435.9,360.6 436.8,360.6 437.8,360.3 438.8,359.6 439.5,359.6 440.2,360.1 440.9,360.3 441.6,360.2 442.6,359.9 443.6,360.1 444.6,360.6 445.6,361.2 446.5,361.5 447.5,361.2 448.4,361.1 449.3,361.1 450.3,360.6 451.2,360.2 451.9,360.2 452.6,360.2 453.3,360.2 454.0,361.1 454.9,360.6 455.9,360.6 456.8,361.1 457.8,361.1 458.8,360.2 459.8,360.2 460.8,360.2 461.7,360.2 462.7,360.2 463.6,360.2 464.3,360.6 465.0,360.6 466.0,358.9 467.0,355.8 468.0,353.7 468.9,356.2" fill="none" stroke="#ff1464" stroke-width="2.3" stroke-linejoin="round" stroke-linecap="round" />
<polyline points="469.8,359.8 470.7,362.9 471.6,364.5 472.6,363.7 473.5,362.8 474.4,362.4 475.4,360.9 476.4,359.3 477.3,357.1 478.2,356.2 479.2,356.3 480.2,356.5 481.2,356.6 482.1,357.3 483.1,358.3 484.1,359.8 485.1,361.2 486.1,362.2 487.0,362.5 488.0,363.0 489.0,363.2 489.9,363.0 490.9,362.3 491.8,361.4 492.8,360.3 493.7,359.2 494.6,357.9 495.6,357.2 496.5,357.0 497.4,357.5 498.2,359.7 499.1,361.2 499.9,362.5 500.8,362.2 501.8,362.0 502.7,361.4 503.6,360.7 504.6,359.9 505.6,359.1 506.5,358.4 507.4,357.8 508.4,358.1 509.3,358.4 510.2,359.0 511.2,359.7 512.1,360.3 513.0,360.6 514.0,360.6 515.0,360.6 516.0,360.9 517.0,361.2 518.0,360.9 519.0,360.6 520.0,360.2 521.0,360.2 522.0,361.1 523.0,361.1 523.7,361.1 524.4,360.6 525.1,360.6 525.8,361.1 526.8,361.1 527.8,361.1 528.8,361.3 529.8,361.6 530.7,360.6 531.7,360.3 532.6,360.2 533.3,360.2 534.0,360.6 535.0,360.3 536.0,360.1 536.9,360.6 537.9,360.9 538.8,361.1 539.7,361.1 540.7,361.1 541.6,360.6 542.6,360.3 543.6,359.6 544.3,359.9 545.0,360.2 545.7,360.2 546.4,360.6 547.4,360.6 548.4,360.6 549.4,360.3 550.4,360.1 551.4,359.9 552.4,360.2 553.3,360.0 554.3,360.2 555.2,360.1 556.1,360.2 557.1,360.5 558.0,360.6 558.9,360.6 559.9,360.2 560.8,360.2 561.5,360.9 562.2,361.2 563.2,360.5 564.2,360.2 564.9,359.8 565.6,359.6 566.3,360.3 567.0,360.6 567.8,357.4 568.5,354.1 569.4,355.1 570.4,357.5 571.3,360.4 572.3,362.8 573.2,363.8 573.9,363.0 574.7,361.4 575.4,361.1 576.2,362.0 577.0,363.2 577.8,365.2 578.6,366.6 579.6,365.8 580.5,364.5 581.5,363.1 582.2,362.7 582.9,361.6" fill="none" stroke="#ff1464" stroke-width="2.3" stroke-linejoin="round" stroke-linecap="round" />
<polyline points="583.9,306.9 584.5,306.0 585.1,307.6 585.7,309.2" fill="none" stroke="#ff1464" stroke-width="2.3" stroke-linejoin="round" stroke-linecap="round" />
<polyline points="588.5,293.0 589.4,294.8" fill="none" stroke="#ff1464" stroke-width="2.3" stroke-linejoin="round" stroke-linecap="round" />
<polyline points="593.0,315.7 593.9,317.5 594.7,315.9" fill="none" stroke="#ff1464" stroke-width="2.3" stroke-linejoin="round" stroke-linecap="round" />
<polyline points="596.3,308.7 597.1,307.1 597.9,308.0 598.7,310.1 599.4,312.2 600.2,313.6 601.2,312.5 602.2,309.5 603.1,306.4 604.1,303.9 605.1,302.8 606.0,303.4 607.0,305.0 607.9,307.7 608.8,310.0 609.7,312.2 610.7,313.8 611.6,314.0 612.5,313.6 613.5,312.9 614.4,311.3 615.3,309.6 616.2,307.1 617.2,306.0 618.1,305.6 619.1,306.2 620.0,306.8 621.0,307.7 621.9,308.7 622.9,309.7 623.8,310.6 624.8,310.7 625.7,311.0 626.7,311.3 627.6,310.0 628.6,308.4 629.5,307.1 630.5,306.1 631.4,306.3 632.3,306.9 633.2,307.6 634.1,308.2 635.0,309.1 636.0,308.8 637.0,309.0 638.0,309.0 639.0,309.0 639.9,308.7 640.9,308.1 641.8,307.9 642.5,307.9 643.2,307.9 644.2,307.9 645.2,307.9 645.9,307.4 646.6,307.4 647.5,307.5 648.5,307.8 649.4,308.4 650.3,308.3 651.3,308.0 652.2,307.4 653.2,307.6 654.2,308.0 655.2,308.7 656.2,309.0 656.9,309.0 657.6,309.0 658.6,308.7 659.6,308.4 660.3,308.4 661.0,308.4 662.0,308.4 663.0,308.4 663.7,308.4 664.4,308.4 665.4,308.1 666.4,307.9 667.4,308.1 668.4,308.4 669.1,308.1 669.8,307.9 670.5,307.9 671.3,308.1 672.0,308.4 673.0,310.1 674.0,312.1" fill="none" stroke="#ff1464" stroke-width="2.3" stroke-linejoin="round" stroke-linecap="round" />
<polyline points="675.6,304.9 676.6,304.9 677.6,304.1 678.6,304.1 679.6,304.1 680.5,304.7 681.4,306.6 682.2,308.6 683.1,310.5 684.0,312.0 684.9,312.6 685.8,312.2 686.8,311.3 687.7,310.0 688.7,308.7 689.6,306.9 690.6,306.0 691.5,305.7 692.5,305.8 693.4,307.0 694.4,307.5 695.3,308.1 696.3,307.8 697.2,308.5 698.2,309.1 699.1,310.2 700.1,310.7 701.0,311.0 702.0,311.1 703.0,310.3 704.0,308.6 705.0,306.9 706.0,306.1 707.0,306.4 708.0,307.0 709.0,307.7 710.0,308.7 711.0,308.5 712.0,308.7 712.7,308.8 713.4,308.6 714.4,308.1 715.4,308.6 716.1,308.6 716.8,308.1 717.5,308.1 718.2,308.6 719.2,308.4 720.2,308.7 721.2,308.4 722.2,308.1 723.2,308.1 724.2,308.1 725.1,308.1 726.1,308.1 727.0,308.1 727.9,308.1 728.9,308.1 729.8,308.1 730.8,308.1 731.8,308.1 732.7,308.1 733.7,308.1 734.6,308.1 735.6,307.8 736.6,307.6 737.6,308.1 738.6,308.7 739.6,308.7 740.6,308.7 741.5,308.6 742.5,308.3 743.4,308.1 744.4,307.8 745.4,307.6 746.1,308.1 746.8,308.7 747.5,308.1 748.2,307.6 749.1,307.8 750.1,308.4 751.0,308.7 752.0,308.4 753.0,308.6 754.0,308.6 755.0,308.6 755.7,308.6 756.4,308.6 757.3,307.8 758.3,308.1 759.2,308.2 760.2,308.7 761.2,308.7 762.1,308.5 763.1,308.2 764.0,308.1 764.9,308.1 765.9,308.1 766.8,308.1 767.5,308.1 768.2,307.7 769.2,307.9 770.2,308.2 771.0,308.6 771.9,308.6" fill="none" stroke="#ff1464" stroke-width="2.3" stroke-linejoin="round" stroke-linecap="round" />
<polyline points="776.3,376.7 777.2,378.2" fill="none" stroke="#ff1464" stroke-width="2.3" stroke-linejoin="round" stroke-linecap="round" />
<polyline points="781.0,353.1 781.7,351.2 782.6,354.5" fill="none" stroke="#ff1464" stroke-width="2.3" stroke-linejoin="round" stroke-linecap="round" />
<polyline points="783.4,359.7 784.3,362.6 785.2,360.8" fill="none" stroke="#ff1464" stroke-width="2.3" stroke-linejoin="round" stroke-linecap="round" />
<polyline points="786.9,352.7 787.8,350.9 788.7,352.4 789.6,355.6 790.5,358.6 791.5,361.0 792.4,363.4 793.4,365.5" fill="none" stroke="#ff1464" stroke-width="2.3" stroke-linejoin="round" stroke-linecap="round" />
<polyline points="174.7,357.4 175.5,361.3" fill="none" stroke="#ff1464" stroke-width="1.5" stroke-linejoin="round" stroke-linecap="round" stroke-linecap="butt"/>
<polyline points="189.2,363.2 189.6,330.6 190.3,313.6 191.0,306.6" fill="none" stroke="#ff1464" stroke-width="1.5" stroke-linejoin="round" stroke-linecap="round" stroke-linecap="butt"/>
<polyline points="193.3,299.7 194.2,295.6" fill="none" stroke="#ff1464" stroke-width="1.5" stroke-linejoin="round" stroke-linecap="round" stroke-linecap="butt"/>
<polyline points="196.0,296.7 197.0,301.1 197.8,305.9 198.6,312.2 199.4,316.7" fill="none" stroke="#ff1464" stroke-width="1.5" stroke-linejoin="round" stroke-linecap="round" stroke-linecap="butt"/>
<polyline points="374.2,307.1 375.0,303.5" fill="none" stroke="#ff1464" stroke-width="1.5" stroke-linejoin="round" stroke-linecap="round" stroke-linecap="butt"/>
<polyline points="377.1,305.4 377.8,311.1 378.4,326.4 379.0,345.1 379.7,354.1 380.4,360.2 381.3,366.9 382.1,372.6 383.0,376.7" fill="none" stroke="#ff1464" stroke-width="1.5" stroke-linejoin="round" stroke-linecap="round" stroke-linecap="butt"/>
<polyline points="384.8,375.6 385.6,369.0 386.5,362.2 387.3,357.9 388.1,354.0" fill="none" stroke="#ff1464" stroke-width="1.5" stroke-linejoin="round" stroke-linecap="round" stroke-linecap="butt"/>
<polyline points="468.9,356.2 469.8,359.8" fill="none" stroke="#ff1464" stroke-width="1.5" stroke-linejoin="round" stroke-linecap="round" stroke-linecap="butt"/>
<polyline points="582.9,361.6 583.2,312.2 583.9,306.9" fill="none" stroke="#ff1464" stroke-width="1.5" stroke-linejoin="round" stroke-linecap="round" stroke-linecap="butt"/>
<polyline points="585.7,309.2 586.6,305.0 587.6,297.2 588.5,293.0" fill="none" stroke="#ff1464" stroke-width="1.5" stroke-linejoin="round" stroke-linecap="round" stroke-linecap="butt"/>
<polyline points="589.4,294.8 590.3,299.4 591.2,305.3 592.1,311.1 593.0,315.7" fill="none" stroke="#ff1464" stroke-width="1.5" stroke-linejoin="round" stroke-linecap="round" stroke-linecap="butt"/>
<polyline points="594.7,315.9 595.5,312.3 596.3,308.7" fill="none" stroke="#ff1464" stroke-width="1.5" stroke-linejoin="round" stroke-linecap="round" stroke-linecap="butt"/>
<polyline points="674.0,312.1 674.8,308.5 675.6,304.9" fill="none" stroke="#ff1464" stroke-width="1.5" stroke-linejoin="round" stroke-linecap="round" stroke-linecap="butt"/>
<polyline points="771.9,308.6 772.3,340.6 773.0,353.8 773.7,360.2 774.6,367.4 775.5,373.2 776.3,376.7" fill="none" stroke="#ff1464" stroke-width="1.5" stroke-linejoin="round" stroke-linecap="round" stroke-linecap="butt"/>
<polyline points="777.2,378.2 778.0,374.7 778.7,368.2 779.5,362.2 780.2,357.4 781.0,353.1" fill="none" stroke="#ff1464" stroke-width="1.5" stroke-linejoin="round" stroke-linecap="round" stroke-linecap="butt"/>
<polyline points="782.6,354.5 783.4,359.7" fill="none" stroke="#ff1464" stroke-width="1.5" stroke-linejoin="round" stroke-linecap="round" stroke-linecap="butt"/>
<polyline points="785.2,360.8 786.0,356.8 786.9,352.7" fill="none" stroke="#ff1464" stroke-width="1.5" stroke-linejoin="round" stroke-linecap="round" stroke-linecap="butt"/>
<polyline points="4.3,375.8 5.2,377.1 6.0,377.5 7.0,376.0 8.0,374.5 8.8,375.3 9.7,376.7 10.5,377.5 11.3,376.8 12.2,375.5 13.0,374.3 14.0,374.9 15.0,376.1 16.0,377.2 17.0,376.6 18.0,375.6 19.0,375.0 20.0,375.5 21.0,376.5 22.0,377.0 23.0,376.7 24.0,376.1 25.0,375.0 26.0,375.7 27.0,375.9 28.0,376.5 29.0,376.1 30.0,376.3 31.0,376.2 32.0,375.9 33.0,375.7 34.0,375.4 35.0,375.8 35.8,375.8 36.5,375.8 37.3,375.8 38.1,375.8 38.8,375.8 39.6,375.8 40.4,375.8 41.1,375.3 41.9,375.3 42.7,375.3 43.5,375.8 44.3,375.8 45.1,375.8 45.9,375.8 46.7,375.8 47.4,375.8 48.2,375.5 49.0,374.4 49.7,374.1 50.5,374.1 51.3,374.1 52.1,375.1 52.9,374.6 53.7,375.8 54.5,377.6 55.3,377.6 56.1,377.1 56.8,377.1 57.7,376.9 58.5,376.4 59.3,375.5 60.1,376.3 60.8,376.6 61.6,377.2 62.4,377.1 63.1,376.7 63.9,376.1 64.7,375.8 65.4,375.8 66.2,375.8 67.0,375.8 67.7,374.6 68.5,372.4 69.2,370.7 69.9,373.7" fill="none" stroke="#b4f000" stroke-width="2.7" stroke-linejoin="round" stroke-linecap="round" />
<polyline points="70.7,379.7 71.4,382.7 72.1,380.2" fill="none" stroke="#b4f000" stroke-width="2.7" stroke-linejoin="round" stroke-linecap="round" />
<polyline points="72.8,375.5 73.5,373.0 74.3,374.1 75.2,376.5 76.0,378.4 76.8,379.5 77.6,379.6 78.5,378.5 79.3,376.7 80.2,375.4 81.0,375.0 81.9,374.4 82.8,373.9 83.6,373.4 84.5,373.6 85.4,373.5 86.3,374.0 87.1,374.8 88.0,376.7 88.8,377.5 89.7,378.0 90.5,377.7 91.3,377.0 92.2,376.3 93.0,376.0 93.8,376.0 94.5,376.0 95.3,376.0 96.1,376.3 96.8,376.9 97.6,377.2 98.4,376.6 99.2,376.0 100.0,376.5 100.8,375.5 101.6,375.5 102.4,375.5 103.1,376.0 103.9,376.2 104.7,376.6 105.5,377.1 106.3,377.2 107.1,376.6 107.9,375.4 108.6,374.8 109.4,375.4 110.2,377.1 110.9,377.8 111.7,376.5 112.5,376.0 113.2,375.5 114.0,375.0 114.8,374.5 115.5,374.2 116.3,374.9 117.1,376.6 117.8,377.2 118.6,376.1 119.4,375.5 120.3,376.6 121.1,377.2 121.9,376.0 122.7,374.8 123.4,375.1 124.2,375.7 125.0,376.0 125.8,376.5 126.6,376.5 127.3,376.0 128.1,376.0 128.9,376.0 129.6,376.3 130.4,376.9 131.2,377.2 132.0,376.8 132.8,376.0 133.6,375.2 134.4,374.2 135.2,374.2 136.0,374.8 136.8,374.8 137.6,374.8 138.4,374.9 139.2,375.4 140.0,376.3 140.8,376.0 141.6,376.0 142.4,375.5 143.1,375.5 143.9,376.8 144.7,377.4 145.4,377.8 146.2,377.4 147.0,376.3 147.7,376.0 148.5,376.0 149.3,376.5 150.0,376.5 150.8,376.5 151.7,376.5 152.4,375.7 153.2,375.1 154.0,374.8 154.7,375.1 155.5,375.7 156.3,375.5 157.0,375.2 157.8,374.6 158.6,374.2 159.3,374.8 160.1,374.8 160.9,374.8 161.7,375.3 162.5,376.0 163.3,376.4 164.1,376.8 164.9,377.1 165.7,377.2 166.5,377.1 167.3,376.6 168.1,376.2 168.9,376.0 169.7,376.0 170.5,376.0 171.2,375.5 172.0,375.5 172.7,376.0" fill="none" stroke="#b4f000" stroke-width="2.7" stroke-linejoin="round" stroke-linecap="round" />
<polyline points="183.8,423.5 184.7,425.1 185.5,428.5" fill="none" stroke="#b4f000" stroke-width="2.7" stroke-linejoin="round" stroke-linecap="round" />
<polyline points="186.3,432.4 187.2,433.5" fill="none" stroke="#b4f000" stroke-width="2.7" stroke-linejoin="round" stroke-linecap="round" />
<polyline points="192.6,423.3 193.4,425.8 194.2,429.0 195.0,431.0 195.7,429.5 196.5,427.3 197.2,425.8 198.0,426.5 198.8,428.2 199.7,429.6 200.5,431.3 201.3,432.0 202.2,432.0 203.2,431.0 204.1,430.0 205.0,429.5 205.8,429.5 206.5,429.5 207.3,429.0 208.1,429.0 208.9,429.0 209.7,429.0 210.4,428.5 211.2,428.5 212.0,428.7 212.8,429.6 213.6,430.1 214.4,430.2 215.2,430.1 216.0,429.6 216.8,429.2 217.7,429.0 218.4,429.3 219.2,429.9 220.0,430.2 220.7,429.6 221.5,428.4 222.3,428.2 223.1,428.4 223.9,427.9 224.7,428.3 225.5,429.5 226.2,429.0 227.0,429.0 227.8,429.0 228.6,429.1 229.4,429.8 230.2,429.6 231.0,429.0 231.8,429.0 232.5,429.0 233.3,429.0 234.1,429.0 234.8,429.0 235.6,429.0 236.4,428.7 237.1,428.1 237.9,427.8 238.7,427.8 239.5,427.8 240.3,428.1 241.0,428.7 241.8,429.0 242.6,428.8 243.4,428.4 244.2,427.9 245.0,427.8 245.8,428.4 246.6,429.6 247.3,430.2 248.1,429.9 248.9,429.3 249.6,429.0 250.4,429.0 251.2,429.0 251.9,429.0 252.7,428.2 253.5,428.1 254.2,427.8 255.0,428.4 255.8,429.0 256.6,429.5 257.4,429.5 258.1,429.5 258.9,428.5 259.7,428.5 260.5,428.5 261.4,429.5 262.2,429.5 263.0,429.5 263.7,429.0 264.5,429.0 265.3,429.0 266.1,429.3 266.9,428.9 267.7,428.4 268.5,428.2 269.2,428.1 270.0,428.7 270.8,429.0 271.6,429.0 272.4,429.0 273.2,429.0 274.0,429.0 274.8,429.6 275.6,430.2 276.4,430.2 277.1,430.2 277.9,430.2 278.5,429.8 279.0,429.0 279.9,426.8 280.8,424.0 281.7,423.2" fill="none" stroke="#b4f000" stroke-width="2.7" stroke-linejoin="round" stroke-linecap="round" />
<polyline points="283.7,432.8 284.6,432.0 285.5,430.2 286.5,427.9 287.4,425.6 288.3,424.8 289.1,427.0 289.9,430.3 290.7,432.0 291.7,430.4 292.7,427.1 293.7,425.5 294.5,425.9 295.4,426.8 296.2,427.8 297.0,428.5 297.8,429.8 298.5,430.0 299.3,430.1 300.1,430.1 300.8,430.1 301.6,430.1 302.4,430.1 303.2,429.1 304.0,429.4 304.7,430.0 305.5,430.4 306.3,430.2 307.1,429.7 307.9,429.3 308.7,429.6 309.5,429.6 310.3,429.6 311.0,429.6 311.8,429.1 312.6,429.1 313.3,429.1 314.1,428.5 314.9,428.4 315.7,429.0 316.5,430.2 317.2,430.9 318.0,430.5 318.9,430.1 319.7,428.7 320.5,428.4 321.3,428.4 322.1,428.4 322.9,428.4 323.7,428.4 324.5,428.4 325.3,427.9 326.1,428.5 326.8,430.2 327.6,430.9 328.4,430.2 329.2,429.1 330.0,429.4 330.7,430.0 331.5,430.4 332.3,430.2 333.1,430.4 333.9,430.0 334.7,429.6 335.5,429.1 336.3,428.6 337.0,428.4 337.8,428.7 338.6,429.3 339.3,429.6 340.1,429.6 340.9,430.1 341.6,430.1 342.4,429.5 343.2,428.9 344.0,428.7 344.8,429.3 345.5,429.6 346.3,429.6 347.1,429.1 347.9,429.1 348.8,429.6 349.6,429.4 350.4,429.0 351.2,428.0 352.0,428.4 352.8,429.0 353.6,429.6 354.3,429.6 355.1,429.6 355.9,429.6 356.6,429.6 357.4,429.6 358.2,429.6 359.0,429.3 359.8,429.7 360.6,430.2 361.4,430.4 362.2,430.7 362.9,429.5 363.7,428.9 364.5,428.7 365.3,429.6 366.1,430.5 366.9,430.9 367.7,430.5 368.5,429.6 369.3,428.7 370.1,428.4 370.9,428.7 371.7,429.3 372.4,429.6 373.2,429.6 374.1,429.6 374.8,429.3 375.6,428.7 376.4,428.9 377.1,428.9 377.9,428.9 378.7,428.9 379.4,427.9 380.2,427.9 381.0,428.4 381.8,429.0 382.6,429.6 383.3,429.6 384.0,429.6 385.0,430.1 386.0,431.0 387.0,432.7 388.0,434.9 389.0,436.0 389.8,434.3" fill="none" stroke="#b4f000" stroke-width="2.7" stroke-linejoin="round" stroke-linecap="round" />
<polyline points="397.7,381.6 398.5,379.1" fill="none" stroke="#b4f000" stroke-width="2.7" stroke-linejoin="round" stroke-linecap="round" />
<polyline points="399.2,374.5 400.0,372.5 401.0,376.0 402.0,378.5 402.8,377.1 403.7,374.9 404.5,373.5 405.3,374.7 406.2,376.8 407.0,378.0 408.0,377.1 409.0,375.4 410.0,374.5 411.0,374.9 412.0,375.8 413.0,376.6 414.0,377.0 415.0,376.8 416.0,376.5 417.0,376.2 418.0,375.5 418.8,375.6 419.5,376.6 420.3,376.7 421.1,376.7 421.8,376.7 422.6,376.2 423.4,376.8 424.2,377.4 425.0,377.3 425.8,376.8 426.6,376.4 427.4,375.7 428.2,376.7 429.0,376.2 429.8,376.0 430.7,375.6 431.5,374.6 432.3,374.4 433.1,374.4 433.9,375.4 434.7,375.4 435.5,374.9 436.3,375.4 437.1,376.2 437.9,376.7 438.6,377.2 439.4,377.4 440.2,377.4 440.9,377.4 441.7,377.4 442.5,376.8 443.2,375.6 444.0,375.4 444.8,375.4 445.6,374.4 446.4,374.4 447.2,374.4 448.0,374.4 448.8,374.9 449.6,376.2 450.4,377.9 451.2,375.7 452.0,374.4 452.8,375.8 453.6,376.4 454.3,376.7 455.1,376.0 456.0,375.6 456.8,375.6 457.6,375.4 458.3,375.4 459.1,374.9 459.9,374.4 460.6,375.1 461.4,376.3 462.2,376.9 463.0,377.4 463.8,377.1 464.7,376.2 465.5,375.7 466.4,373.7 467.4,372.0" fill="none" stroke="#b4f000" stroke-width="2.7" stroke-linejoin="round" stroke-linecap="round" />
<polyline points="469.4,383.0 470.3,380.5" fill="none" stroke="#b4f000" stroke-width="2.7" stroke-linejoin="round" stroke-linecap="round" />
<polyline points="471.1,375.5 472.0,373.0 472.8,374.8 473.7,378.2 474.5,380.0 475.5,378.9 476.5,376.5 477.5,374.1 478.5,373.0 479.5,374.6 480.5,377.4 481.5,378.5 482.5,375.8 483.5,373.5 484.4,374.3 485.2,375.5 486.1,377.2 487.0,378.0 488.0,377.6 489.0,377.2 490.0,376.4 491.0,376.0 491.8,376.0 492.5,376.0 493.3,376.0 494.1,376.0 494.9,376.0 495.7,375.8 496.5,375.4 497.3,374.9 498.1,374.8 498.9,376.0 499.7,377.2 500.5,376.6 501.3,375.4 502.0,374.8 502.8,375.9 503.7,376.0 504.5,375.4 505.3,374.8 506.0,375.1 506.8,375.7 507.6,376.0 508.3,376.0 509.1,376.5 509.9,376.5 510.6,376.0 511.4,376.0 512.2,376.0 513.0,376.2 513.8,376.6 514.6,377.1 515.4,376.8 516.1,377.5 516.9,377.0 517.7,375.5 518.5,374.7 519.3,375.2 520.1,375.2 520.9,374.2 521.7,376.0 522.5,377.2 523.3,377.2 524.0,377.2 524.8,377.2 525.6,377.1 526.4,377.1 527.2,376.7 528.0,376.0 528.8,376.2 529.6,376.6 530.4,377.1 531.3,377.2 532.0,376.6 532.8,375.4 533.6,374.8 534.4,374.8 535.2,374.8 536.0,375.4 536.8,376.0 537.6,375.8 538.4,375.4 539.2,375.4 540.0,375.2 540.8,375.4 541.5,376.6 542.3,377.2 543.1,376.9 543.8,376.3 544.6,376.0 545.4,376.0 546.1,376.0 546.9,376.0 547.7,376.0 548.4,376.0 549.2,376.0 550.0,375.7 550.7,375.1 551.5,375.2 552.3,375.6 553.0,376.2 553.8,376.0 554.6,376.0 555.4,376.0 556.2,376.0 557.0,376.0 557.8,376.0 558.6,376.0 559.4,376.2 560.2,376.6 561.0,377.1 561.8,376.8 562.6,377.0 563.4,376.0 564.1,376.0 564.9,375.5 565.7,375.5 566.4,374.8 567.1,375.4 567.8,376.0 568.5,373.8 569.3,371.5" fill="none" stroke="#b4f000" stroke-width="2.7" stroke-linejoin="round" stroke-linecap="round" />
<polyline points="574.6,421.2 575.4,419.5 576.2,421.6" fill="none" stroke="#b4f000" stroke-width="2.7" stroke-linejoin="round" stroke-linecap="round" />
<polyline points="577.8,430.9 578.6,433.0 579.6,431.8 580.5,428.5 581.5,425.2 582.4,422.4 583.4,421.2 584.2,423.8" fill="none" stroke="#b4f000" stroke-width="2.7" stroke-linejoin="round" stroke-linecap="round" />
<polyline points="585.8,430.9 586.6,432.5 587.6,429.8" fill="none" stroke="#b4f000" stroke-width="2.7" stroke-linejoin="round" stroke-linecap="round" />
<polyline points="589.5,422.2 590.5,420.5 591.3,422.1 592.2,424.9 593.0,428.1 593.9,430.4 594.7,431.5 595.7,430.2 596.6,428.0 597.5,425.3 598.5,424.0 599.4,424.9 600.2,427.0 601.1,429.1 602.0,430.0 603.0,429.8 604.0,429.8 605.0,428.7 606.0,429.0 606.8,429.3 607.5,429.9 608.3,430.2 609.1,428.6 609.9,428.0 610.7,428.3 611.4,429.4 612.2,429.8 613.0,429.4 613.7,428.8 614.5,428.5 615.3,428.5 616.1,428.5 616.9,428.2 617.7,427.6 618.4,427.2 619.2,427.2 620.0,427.2 620.7,426.8 621.5,427.4 622.3,428.0 623.1,428.0 623.9,428.5 624.7,428.5 625.5,428.5 626.3,428.2 627.1,427.6 627.8,426.8 628.7,427.4 629.5,428.0 630.2,428.5 631.0,428.5 631.8,428.5 632.6,429.1 633.4,429.8 634.1,429.9 634.9,429.3 635.7,428.5 636.5,428.5 637.3,429.0 638.0,429.0 638.8,429.0 639.6,429.0 640.4,428.5 641.2,428.5 642.0,428.3 642.8,427.9 643.6,427.4 644.4,427.2 645.2,427.9 645.9,429.1 646.7,429.8 647.5,429.2 648.3,429.2 649.1,429.2 649.9,429.2 650.7,428.9 651.5,428.3 652.2,428.5 653.0,428.5 653.8,428.5 654.6,428.5 655.4,428.0 656.2,429.0 657.0,429.0 657.7,429.0 658.6,428.4 659.4,427.8 660.1,427.6 660.9,428.2 661.7,428.5 662.4,428.2 663.2,427.6 664.0,427.2 664.8,427.9 665.6,428.5 666.3,428.2 667.1,427.1 667.9,426.8 668.7,426.8 669.5,427.2 670.2,427.9 671.0,428.5 671.8,426.6" fill="none" stroke="#b4f000" stroke-width="2.7" stroke-linejoin="round" stroke-linecap="round" />
<polyline points="672.6,422.9 673.4,421.0 674.1,423.9" fill="none" stroke="#b4f000" stroke-width="2.7" stroke-linejoin="round" stroke-linecap="round" />
<polyline points="674.8,429.1 675.5,432.0 676.4,431.3 677.3,429.5 678.2,427.5 679.1,425.7 680.0,425.5 681.0,427.1 682.0,428.9 683.0,430.5 683.8,429.7 684.6,428.0 685.5,426.8 686.3,426.0 687.2,426.9 688.1,427.8 689.1,428.1 690.0,428.5 690.8,428.2 691.5,427.6 692.3,427.2 693.1,427.2 693.8,427.8 694.6,427.8 695.4,427.9 696.1,429.1 696.9,429.2 697.7,428.6 698.5,428.0 699.3,428.0 700.0,429.0 700.8,429.0 701.6,428.7 702.3,427.6 703.1,427.2 703.9,428.1 704.6,428.7 705.4,429.0 706.2,428.5 707.0,428.5 707.8,428.0 708.6,428.5 709.4,428.5 710.2,428.5 710.9,428.5 711.7,428.5 712.5,428.5 713.3,428.5 714.1,428.5 714.8,428.5 715.6,428.7 716.4,428.1 717.1,427.2 717.9,427.4 718.7,427.9 719.6,428.3 720.4,428.5 721.2,428.5 722.0,428.5 722.7,428.5 723.5,428.5 724.3,428.5 725.0,428.8 725.8,429.4 726.6,429.8 727.4,429.3 728.2,428.5 729.0,427.7 729.8,427.2 730.6,427.4 731.3,428.6 732.1,429.2 732.9,429.5 733.6,429.0 734.4,428.5 735.2,428.0 735.9,427.5 736.7,427.2 737.5,428.1 738.2,428.2 739.0,428.5 739.8,427.9 740.6,427.2 741.4,427.4 742.2,428.2 743.0,428.6 743.8,429.0 744.6,429.2 745.4,429.8 746.2,429.1 747.0,427.9 747.7,427.2 748.5,427.9 749.3,428.5 750.1,428.5 750.9,428.5 751.7,429.0 752.5,429.0 753.2,429.0 754.0,428.8 754.8,429.4 755.5,429.8 756.3,429.4 757.1,428.8 757.8,428.5 758.6,428.5 759.4,428.5 760.1,428.0 760.9,428.0 761.7,428.5 762.4,428.5 763.2,428.8 764.0,429.4 764.7,429.8 765.6,429.1 766.4,428.5 767.2,428.5 768.1,428.5 769.0,428.5 770.0,429.2 771.0,430.5" fill="none" stroke="#b4f000" stroke-width="2.7" stroke-linejoin="round" stroke-linecap="round" />
<polyline points="774.7,436.5 775.5,434.8" fill="none" stroke="#b4f000" stroke-width="2.7" stroke-linejoin="round" stroke-linecap="round" />
<polyline points="777.2,424.9 778.0,422.7 778.8,425.8" fill="none" stroke="#b4f000" stroke-width="2.7" stroke-linejoin="round" stroke-linecap="round" />
<polyline points="779.7,431.5 780.5,434.6 781.5,434.5 782.4,432.7 783.4,429.5" fill="none" stroke="#b4f000" stroke-width="2.7" stroke-linejoin="round" stroke-linecap="round" />
<polyline points="785.3,361.5 785.9,358.6 786.5,357.7" fill="none" stroke="#b4f000" stroke-width="2.7" stroke-linejoin="round" stroke-linecap="round" />
<polyline points="788.3,378.0 789.0,376.3 789.8,373.2 790.5,371.5" fill="none" stroke="#b4f000" stroke-width="2.7" stroke-linejoin="round" stroke-linecap="round" />
<polyline points="791.5,386.0 792.2,385.1" fill="none" stroke="#b4f000" stroke-width="2.7" stroke-linejoin="round" stroke-linecap="round" />
<polyline points="69.9,373.7 70.7,379.7" fill="none" stroke="#b4f000" stroke-width="1.8" stroke-linejoin="round" stroke-linecap="round" stroke-linecap="butt"/>
<polyline points="72.1,380.2 72.8,375.5" fill="none" stroke="#b4f000" stroke-width="1.8" stroke-linejoin="round" stroke-linecap="round" stroke-linecap="butt"/>
<polyline points="172.7,376.0 173.6,372.2 174.5,368.4 175.3,373.0 176.1,384.0 177.1,418.3 178.1,440.4 178.8,435.8 179.5,427.3 180.2,422.7 181.0,428.0 181.8,433.4 182.8,428.7 183.8,423.5" fill="none" stroke="#b4f000" stroke-width="1.8" stroke-linejoin="round" stroke-linecap="round" stroke-linecap="butt"/>
<polyline points="185.5,428.5 186.3,432.4" fill="none" stroke="#b4f000" stroke-width="1.8" stroke-linejoin="round" stroke-linecap="round" stroke-linecap="butt"/>
<polyline points="187.2,433.5 188.2,427.5 189.2,421.5 189.9,426.4 190.6,430.8 191.6,427.1 192.6,423.3" fill="none" stroke="#b4f000" stroke-width="1.8" stroke-linejoin="round" stroke-linecap="round" stroke-linecap="butt"/>
<polyline points="281.7,423.2 282.7,428.2 283.7,432.8" fill="none" stroke="#b4f000" stroke-width="1.8" stroke-linejoin="round" stroke-linecap="round" stroke-linecap="butt"/>
<polyline points="389.8,434.3 390.5,430.0 391.2,415.9 391.9,395.0 392.4,375.8 393.0,364.0 393.9,373.4 394.7,382.7 395.4,375.1 396.2,367.6 396.9,374.6 397.7,381.6" fill="none" stroke="#b4f000" stroke-width="1.8" stroke-linejoin="round" stroke-linecap="round" stroke-linecap="butt"/>
<polyline points="398.5,379.1 399.2,374.5" fill="none" stroke="#b4f000" stroke-width="1.8" stroke-linejoin="round" stroke-linecap="round" stroke-linecap="butt"/>
<polyline points="467.4,372.0 468.4,377.5 469.4,383.0" fill="none" stroke="#b4f000" stroke-width="1.8" stroke-linejoin="round" stroke-linecap="round" stroke-linecap="butt"/>
<polyline points="470.3,380.5 471.1,375.5" fill="none" stroke="#b4f000" stroke-width="1.8" stroke-linejoin="round" stroke-linecap="round" stroke-linecap="butt"/>
<polyline points="569.3,371.5 570.2,385.0 570.8,425.0 571.2,444.0 572.1,438.3 573.0,430.0 573.8,425.3 574.6,421.2" fill="none" stroke="#b4f000" stroke-width="1.8" stroke-linejoin="round" stroke-linecap="round" stroke-linecap="butt"/>
<polyline points="576.2,421.6 577.0,426.2 577.8,430.9" fill="none" stroke="#b4f000" stroke-width="1.8" stroke-linejoin="round" stroke-linecap="round" stroke-linecap="butt"/>
<polyline points="584.2,423.8 585.0,427.4 585.8,430.9" fill="none" stroke="#b4f000" stroke-width="1.8" stroke-linejoin="round" stroke-linecap="round" stroke-linecap="butt"/>
<polyline points="587.6,429.8 588.5,426.0 589.5,422.2" fill="none" stroke="#b4f000" stroke-width="1.8" stroke-linejoin="round" stroke-linecap="round" stroke-linecap="butt"/>
<polyline points="671.8,426.6 672.6,422.9" fill="none" stroke="#b4f000" stroke-width="1.8" stroke-linejoin="round" stroke-linecap="round" stroke-linecap="butt"/>
<polyline points="674.1,423.9 674.8,429.1" fill="none" stroke="#b4f000" stroke-width="1.8" stroke-linejoin="round" stroke-linecap="round" stroke-linecap="butt"/>
<polyline points="771.0,430.5 772.0,426.8 773.0,423.2 773.9,430.4 774.7,436.5" fill="none" stroke="#b4f000" stroke-width="1.8" stroke-linejoin="round" stroke-linecap="round" stroke-linecap="butt"/>
<polyline points="775.5,434.8 776.4,429.8 777.2,424.9" fill="none" stroke="#b4f000" stroke-width="1.8" stroke-linejoin="round" stroke-linecap="round" stroke-linecap="butt"/>
<polyline points="778.8,425.8 779.7,431.5" fill="none" stroke="#b4f000" stroke-width="1.8" stroke-linejoin="round" stroke-linecap="round" stroke-linecap="butt"/>
<polyline points="783.4,429.5 784.0,416.8 784.6,395.0 785.3,361.5" fill="none" stroke="#b4f000" stroke-width="1.8" stroke-linejoin="round" stroke-linecap="round" stroke-linecap="butt"/>
<polyline points="786.5,357.7 787.4,367.6 788.3,378.0" fill="none" stroke="#b4f000" stroke-width="1.8" stroke-linejoin="round" stroke-linecap="round" stroke-linecap="butt"/>
<polyline points="790.5,371.5 791.5,386.0" fill="none" stroke="#b4f000" stroke-width="1.8" stroke-linejoin="round" stroke-linecap="round" stroke-linecap="butt"/>
<polyline points="792.2,385.1 793.0,376.0" fill="none" stroke="#b4f000" stroke-width="1.8" stroke-linejoin="round" stroke-linecap="round" stroke-linecap="butt"/>
<polyline points="5.2,239.9 6.0,242.8 7.0,240.4" fill="none" stroke="#00c4f0" stroke-width="2.3" stroke-linejoin="round" stroke-linecap="round" />
<polyline points="8.0,236.4 9.0,233.6 9.8,234.7 10.7,236.9 11.5,238.1 12.3,237.6 13.2,235.9 14.0,235.0 14.8,235.9 15.7,237.1 16.5,238.1 17.3,237.1 18.2,235.9 19.0,235.0 19.8,235.8 20.7,237.2 21.5,238.0 22.3,237.4 23.2,236.1 24.0,235.9 24.8,236.1 25.7,237.4 26.5,238.0 27.3,237.4 28.2,236.1 29.0,235.5 29.8,236.0 30.7,237.4 31.5,237.9 32.3,237.2 33.2,236.8 34.0,236.5 35.0,236.5 36.0,236.1 36.7,235.8 37.4,235.5 38.3,235.8 39.3,236.8 40.2,237.1 41.2,236.8 42.2,236.5 43.1,236.6 44.1,236.5 45.0,237.5 45.7,236.9 46.4,236.4 47.3,235.6 48.3,235.9 49.2,236.1 50.2,235.8 51.2,235.9 52.1,235.9 53.1,235.9 54.0,235.9 54.7,235.9 55.4,235.9 56.1,236.2 56.8,236.5 57.5,236.5 58.2,236.5 59.1,236.8 60.1,236.5 61.0,236.4 62.0,236.9 63.0,237.1 64.0,236.8 65.0,236.5 65.5,236.5 66.0,236.5 66.8,236.5 67.5,236.5 68.4,234.5 69.3,232.9 70.0,235.4" fill="none" stroke="#00c4f0" stroke-width="2.3" stroke-linejoin="round" stroke-linecap="round" />
<polyline points="70.7,240.0 71.4,242.4" fill="none" stroke="#00c4f0" stroke-width="2.3" stroke-linejoin="round" stroke-linecap="round" />
<polyline points="73.4,229.9 74.4,233.0" fill="none" stroke="#00c4f0" stroke-width="2.3" stroke-linejoin="round" stroke-linecap="round" />
<polyline points="75.4,238.2 76.4,241.2 77.4,239.1" fill="none" stroke="#00c4f0" stroke-width="2.3" stroke-linejoin="round" stroke-linecap="round" />
<polyline points="78.4,235.1 79.4,233.0 80.4,234.4 81.4,237.1 82.4,238.5 83.4,237.7 84.4,236.0 85.4,234.3 86.4,233.5 87.4,234.8 88.4,237.2 89.4,238.5 90.3,238.1 91.1,237.2 92.0,236.5 93.0,236.1 94.0,235.9 95.0,236.2 96.0,236.5 96.7,236.5 97.4,236.5 98.3,236.9 99.3,236.9 100.2,236.5 101.2,236.2 102.2,235.9 102.9,235.9 103.6,235.5 104.3,235.9 105.0,235.9 105.7,236.2 106.4,236.5 107.4,236.5 108.4,236.9 109.4,236.9 110.4,236.9 111.1,236.9 111.8,236.5 112.8,236.8 113.8,237.1 114.7,236.9 115.7,237.1 116.6,236.9 117.6,236.9 118.6,236.9 119.3,236.5 120.0,236.5 121.0,236.5 122.0,236.5 122.9,236.5 123.9,236.5 124.8,236.9 125.7,236.5 126.7,236.5 127.6,236.1 128.6,236.5 129.6,236.5 130.6,236.2 131.6,235.9 132.6,236.5 133.6,237.5 134.3,237.2 135.0,236.9 136.0,237.2 137.0,237.5 137.9,236.9 138.9,236.6 139.8,236.5 140.7,236.5 141.7,236.5 142.6,236.5 143.5,236.6 144.5,236.9 145.4,237.1 146.4,237.3 147.4,236.9 148.4,236.6 149.4,235.9 150.4,236.2 151.4,236.5 152.4,236.5 153.4,236.1 154.4,236.3 155.4,236.6 156.1,236.3 156.8,236.5 157.8,236.8 158.8,237.1 159.8,236.8 160.8,236.5 161.7,236.5 162.7,236.5 163.6,236.5 164.3,236.8 165.0,237.1 165.9,237.4 166.9,237.1 167.8,236.5 168.8,236.5 169.8,236.5 170.7,236.5 171.5,236.5 172.1,236.5" fill="none" stroke="#00c4f0" stroke-width="2.3" stroke-linejoin="round" stroke-linecap="round" />
<polyline points="172.4,249.5 173.2,251.5" fill="none" stroke="#00c4f0" stroke-width="2.3" stroke-linejoin="round" stroke-linecap="round" />
<polyline points="173.7,297.6 174.3,295.4 175.0,292.2 176.0,289.6 177.0,287.4 178.0,286.6 178.8,288.3 179.7,291.5 180.5,293.2 181.3,291.4 182.2,288.5 183.0,285.8 183.8,287.7" fill="none" stroke="#00c4f0" stroke-width="2.3" stroke-linejoin="round" stroke-linecap="round" />
<polyline points="184.7,291.4 185.5,293.3 186.3,292.1" fill="none" stroke="#00c4f0" stroke-width="2.3" stroke-linejoin="round" stroke-linecap="round" />
<polyline points="187.2,288.3 188.0,285.8 188.8,287.2" fill="none" stroke="#00c4f0" stroke-width="2.3" stroke-linejoin="round" stroke-linecap="round" />
<polyline points="189.7,291.8 190.5,293.7 191.3,291.6" fill="none" stroke="#00c4f0" stroke-width="2.3" stroke-linejoin="round" stroke-linecap="round" />
<polyline points="192.2,288.0 193.0,286.3 193.8,287.9 194.7,290.7 195.5,292.3 196.3,291.0 197.2,288.6 198.0,287.8 199.0,289.2 200.0,291.8 201.0,293.7 202.0,293.1 203.0,291.8 204.0,291.2 205.0,291.6 206.0,292.1 206.7,291.3 207.4,291.1 208.3,291.1 209.3,291.1 210.2,291.1 211.2,291.3 212.2,291.6 212.9,291.3 213.6,291.5 214.5,291.6 215.5,291.9 216.4,291.6 217.1,292.1 217.8,292.1 218.8,290.6 219.8,290.1 220.8,290.3 221.8,290.6 222.8,290.9 223.8,291.6 224.8,291.3 225.8,291.1 226.8,291.1 227.8,291.1 228.8,291.5 229.8,291.5 230.5,291.5 231.2,290.6 232.2,290.6 233.2,290.6 234.2,291.5 235.2,291.1 236.2,291.1 237.2,291.1 237.9,291.1 238.6,291.1 239.6,290.8 240.6,290.5 241.6,291.2 242.6,291.1 243.3,291.1 244.0,291.1 245.0,291.3 246.0,291.6 246.7,291.3 247.4,291.1 248.4,290.9 249.4,291.6 250.1,291.1 250.8,290.1 251.5,290.3 252.2,290.6 253.1,290.9 254.1,291.1 255.0,291.2 255.7,291.0 256.3,291.2 257.0,291.1 258.0,291.1 259.0,291.1 259.7,291.1 260.4,291.1 261.4,291.1 262.4,291.1 263.1,291.1 263.8,291.1 264.8,291.1 265.8,290.6 266.7,290.5 267.7,290.6 268.6,290.5 269.3,290.5 270.0,290.9 270.7,291.5 271.4,292.1 272.4,291.4 273.4,291.1 274.3,290.8 275.3,291.0 276.2,290.9 277.1,291.1 278.0,291.1 279.0,292.3 280.0,293.2 280.9,291.0" fill="none" stroke="#00c4f0" stroke-width="2.3" stroke-linejoin="round" stroke-linecap="round" />
<polyline points="281.8,286.4 282.7,284.1 283.5,287.2" fill="none" stroke="#00c4f0" stroke-width="2.3" stroke-linejoin="round" stroke-linecap="round" />
<polyline points="284.2,293.1 285.0,296.2 285.8,294.9" fill="none" stroke="#00c4f0" stroke-width="2.3" stroke-linejoin="round" stroke-linecap="round" />
<polyline points="287.5,287.3 288.3,285.6 289.1,287.1" fill="none" stroke="#00c4f0" stroke-width="2.3" stroke-linejoin="round" stroke-linecap="round" />
<polyline points="289.9,290.8 290.7,293.2 291.5,293.0 292.4,292.4 293.2,291.7 294.0,291.2 295.0,290.9 296.0,290.7 296.7,291.0 297.4,291.2 298.2,291.2 299.0,291.2 299.9,290.0 300.8,288.8 301.5,288.9 302.3,290.6 303.0,291.2 304.0,291.4 305.0,291.4 306.0,290.9 307.0,290.3 307.9,290.4 308.9,290.7 309.8,290.9 310.7,290.9 311.7,290.9 312.6,290.9 313.6,290.9 314.6,290.9 315.6,290.9 316.6,290.4 317.3,290.4 318.0,290.4 319.0,290.1 320.0,289.9 320.7,290.3 321.4,290.3 322.4,290.9 323.4,291.4 324.3,291.1 325.3,291.0 326.2,290.8 326.9,291.0 327.6,291.3 328.6,290.6 329.6,290.3 330.6,290.6 331.6,290.9 332.5,290.7 333.5,290.4 334.4,290.3 335.3,290.4 336.3,290.7 337.2,291.3 338.2,291.3 339.2,291.3 340.1,290.7 341.1,290.4 342.0,290.8 343.0,291.0 344.0,291.3 344.9,290.9 345.9,290.9 346.8,290.9 347.7,290.9 348.7,290.9 349.6,291.3 350.6,291.0 351.6,290.8 352.5,290.9 353.5,291.2 354.4,291.3 355.1,291.3 355.8,290.9 356.8,290.6 357.8,290.8 358.8,291.0 359.8,291.3 360.7,291.2 361.7,290.4 362.6,290.3 363.5,290.8 364.5,290.8 365.4,290.3 366.1,290.6 366.8,291.3 367.8,290.9 368.8,290.9 369.8,290.9 370.8,290.9 371.5,290.9 372.2,290.9 372.9,290.4 373.5,290.4 374.3,290.2 375.2,288.3 376.0,287.2 376.8,288.7" fill="none" stroke="#00c4f0" stroke-width="2.3" stroke-linejoin="round" stroke-linecap="round" />
<polyline points="377.5,292.3 378.3,294.2 379.2,292.7 380.1,289.8 381.0,288.2 381.9,288.9 382.8,290.4 383.6,292.1 384.5,293.6 385.4,294.2 386.2,292.8 387.0,291.2 387.3,294.2" fill="none" stroke="#00c4f0" stroke-width="2.3" stroke-linejoin="round" stroke-linecap="round" />
<polyline points="387.5,241.5 388.1,241.0 388.8,240.5" fill="none" stroke="#00c4f0" stroke-width="2.3" stroke-linejoin="round" stroke-linecap="round" />
<polyline points="389.2,227.5 389.9,226.7 390.5,226.5" fill="none" stroke="#00c4f0" stroke-width="2.3" stroke-linejoin="round" stroke-linecap="round" />
<polyline points="392.0,236.9 392.7,240.1" fill="none" stroke="#00c4f0" stroke-width="2.3" stroke-linejoin="round" stroke-linecap="round" />
<polyline points="394.4,231.9 395.3,233.9" fill="none" stroke="#00c4f0" stroke-width="2.3" stroke-linejoin="round" stroke-linecap="round" />
<polyline points="396.1,237.5 397.0,239.5 397.7,237.8 398.5,234.7 399.2,233.0 400.1,234.7" fill="none" stroke="#00c4f0" stroke-width="2.3" stroke-linejoin="round" stroke-linecap="round" />
<polyline points="400.9,238.3 401.8,239.5 402.7,237.8 403.7,234.7 404.6,233.0 405.5,233.4 406.4,234.3 407.3,235.9 408.2,236.7 409.1,237.6 410.0,238.0 411.0,237.7 412.0,237.0 413.0,236.3 414.0,236.0 415.0,236.2 416.0,236.5 417.0,236.2 418.0,235.9 419.0,236.2 420.0,236.5 421.0,236.5 422.0,236.9 423.0,236.9 424.0,236.9 424.9,236.1 425.9,236.1 426.8,236.5 427.8,236.9 428.8,236.1 429.5,236.1 430.2,236.1 431.2,236.1 432.2,236.1 433.2,236.1 434.2,236.5 435.1,236.4 436.1,236.1 437.0,235.9 438.0,236.7 439.0,236.9 439.9,236.8 440.9,236.1 441.8,235.9 442.8,236.1 443.8,236.6 444.5,236.3 445.2,236.1 446.1,236.5 447.1,236.5 448.0,236.5 448.7,236.5 449.4,236.5 450.4,236.5 451.4,236.5 452.3,236.5 453.3,236.5 454.2,236.1 455.2,236.1 456.2,236.1 456.9,236.1 457.6,236.5 458.6,236.5 459.6,236.5 460.6,236.2 461.6,235.9 462.6,236.2 463.6,236.5 464.3,236.5 465.0,236.5 465.5,236.9 466.0,236.5 466.8,236.5 467.5,236.5 468.4,234.5 469.3,232.5 470.0,235.0" fill="none" stroke="#00c4f0" stroke-width="2.3" stroke-linejoin="round" stroke-linecap="round" />
<polyline points="470.7,240.0 471.4,242.4" fill="none" stroke="#00c4f0" stroke-width="2.3" stroke-linejoin="round" stroke-linecap="round" />
<polyline points="473.4,230.0 474.4,232.9" fill="none" stroke="#00c4f0" stroke-width="2.3" stroke-linejoin="round" stroke-linecap="round" />
<polyline points="475.4,238.3 476.4,241.2 477.4,238.6" fill="none" stroke="#00c4f0" stroke-width="2.3" stroke-linejoin="round" stroke-linecap="round" />
<polyline points="478.4,234.7 479.4,232.6 480.4,234.4 481.4,237.1 482.4,238.5 483.4,237.8 484.4,236.2 485.4,234.7 486.4,234.0 487.4,235.2 488.4,237.3 489.4,238.9 490.3,238.0 491.1,237.0 492.0,236.5 493.0,236.6 494.0,236.7 495.0,236.4 496.0,236.1 496.7,236.8 497.4,237.1 498.4,236.8 499.4,236.5 500.4,236.1 501.4,236.1 502.1,236.5 502.8,236.1 503.8,236.1 504.8,236.1 505.8,236.5 506.8,236.5 507.8,236.4 508.8,236.7 509.8,236.4 510.8,235.7 511.8,235.9 512.8,236.2 513.5,235.6 514.2,235.5 515.1,235.7 516.1,235.5 517.0,235.7 518.0,236.1 519.0,236.1 520.0,236.4 521.0,236.7 522.0,236.2 523.0,236.2 524.0,236.0 525.0,236.1 525.7,235.8 526.4,235.5 527.3,235.5 528.3,235.5 529.2,235.5 530.2,235.8 531.2,236.1 532.2,236.1 533.2,236.1 533.9,235.8 534.6,235.1 535.5,235.2 536.5,235.5 537.4,235.7 538.4,235.7 539.4,236.1 540.4,236.1 541.4,236.1 542.4,235.8 543.4,235.5 544.4,235.8 545.4,236.1 546.1,236.1 546.8,236.1 547.7,236.2 548.7,236.5 549.6,236.7 550.3,236.5 551.0,236.0 552.0,235.4 553.0,235.7 554.0,235.7 555.0,235.7 555.7,236.5 556.4,236.5 557.1,236.1 557.8,236.1 558.7,236.2 559.7,236.1 560.6,236.7 561.3,236.7 562.0,236.7 563.0,236.1 564.0,235.5 565.0,236.0 566.0,236.0 566.7,235.3 567.5,235.7 567.9,236.9" fill="none" stroke="#00c4f0" stroke-width="2.3" stroke-linejoin="round" stroke-linecap="round" />
<polyline points="568.8,279.1 569.8,280.2" fill="none" stroke="#00c4f0" stroke-width="2.3" stroke-linejoin="round" stroke-linecap="round" />
<polyline points="574.9,285.1 575.8,286.3 576.6,289.0 577.5,292.1 578.3,294.8 579.2,295.9 580.1,294.5 581.0,292.7" fill="none" stroke="#00c4f0" stroke-width="2.3" stroke-linejoin="round" stroke-linecap="round" />
<polyline points="581.9,288.4 582.8,285.1 583.7,282.4 584.6,281.9 585.3,284.7" fill="none" stroke="#00c4f0" stroke-width="2.3" stroke-linejoin="round" stroke-linecap="round" />
<polyline points="586.1,289.8 586.8,292.6 587.6,291.3 588.4,288.3 589.2,285.4 590.0,284.5 590.9,285.2 591.8,287.0 592.7,289.4 593.6,291.2 594.5,293.0 595.4,293.8 596.3,293.1 597.1,291.6 598.0,289.4 598.8,287.9 599.7,287.3 600.5,288.5 601.4,290.2 602.2,291.9 603.0,292.6 604.0,292.4 605.0,291.9 606.0,290.8 607.0,291.2 608.0,291.0 609.0,291.5 610.0,292.1 611.0,291.3 612.0,291.1 612.7,291.1 613.4,290.6 614.4,290.9 615.4,292.1 616.1,291.1 616.8,290.5 617.5,290.8 618.2,291.1 619.2,290.8 620.2,290.5 621.1,290.8 622.1,290.9 623.0,291.2 624.0,291.8 625.0,291.5 625.7,291.5 626.4,291.5 627.1,291.5 627.8,291.1 628.5,291.1 629.2,291.5 629.9,291.5 630.6,291.5 631.5,291.2 632.5,291.5 633.4,291.6 634.4,291.0 635.4,290.5 636.1,290.5 636.8,290.5 637.7,291.1 638.7,291.4 639.6,291.5 640.6,290.6 641.6,290.6 642.6,290.9 643.6,291.2 644.5,291.5 645.5,291.3 646.4,291.1 647.4,290.7 648.4,290.5 649.3,291.1 650.3,291.4 651.2,291.5 651.9,291.5 652.6,291.1 653.3,291.1 654.0,291.1 655.0,291.1 656.0,291.1 657.0,291.1 658.0,291.1 658.9,291.2 659.9,291.0 660.8,291.2 661.8,290.9 662.8,290.6 663.5,291.1 664.2,291.1 665.2,290.6 666.2,290.6 667.2,290.6 668.2,291.5 668.9,291.5 669.6,291.5 670.3,291.8 671.0,291.6 671.7,291.5 672.3,291.3 673.0,291.1 673.9,289.6 674.7,286.4 675.6,284.7 676.3,287.8" fill="none" stroke="#00c4f0" stroke-width="2.3" stroke-linejoin="round" stroke-linecap="round" />
<polyline points="677.0,293.1 677.7,296.2 678.6,293.9" fill="none" stroke="#00c4f0" stroke-width="2.3" stroke-linejoin="round" stroke-linecap="round" />
<polyline points="679.5,289.1 680.4,286.8 681.3,288.2 682.2,290.3 683.1,292.8 684.0,293.7 685.0,292.8 686.0,291.5 687.0,290.8 688.0,291.3 689.0,291.1 690.0,290.9 691.0,291.2 692.0,292.0 693.0,292.2 693.7,291.5 694.4,291.2 695.4,291.2 696.4,291.7 697.3,291.7 698.3,291.7 699.2,291.7 699.9,291.4 700.6,291.1 701.3,291.7 702.0,292.2 703.0,292.2 704.0,291.8 705.0,291.8 706.0,292.2 706.7,292.2 707.4,292.2 708.1,292.0 708.8,291.7 709.5,292.0 710.2,292.2 710.9,291.6 711.6,291.7 712.6,291.3 713.6,291.1 714.6,290.7 715.6,290.7 716.6,291.0 717.6,291.2 718.6,291.0 719.6,290.7 720.3,291.2 721.0,292.2 722.0,291.7 723.0,290.7 723.9,290.5 724.9,291.1 725.8,291.4 726.8,291.1 727.8,291.7 728.5,291.5 729.2,291.8 730.2,291.1 731.2,290.8 732.1,291.4 733.1,291.7 734.0,292.2 735.0,292.0 736.0,291.7 737.0,290.9 738.0,290.7 739.0,291.0 740.0,290.8 741.0,290.8 742.0,290.8 743.0,291.1 744.0,291.8 745.0,291.5 746.0,291.7 747.0,292.0 748.0,292.2 748.9,292.2 749.9,291.5 750.8,291.2 751.8,291.4 752.8,290.2 753.8,290.5 754.8,291.7 755.8,291.7 756.8,291.7 757.7,291.8 758.7,291.2 759.6,291.8 760.5,291.5 761.5,291.0 762.4,290.7 763.4,290.5 764.4,290.8 765.4,290.8 766.4,291.2 767.4,291.2 768.4,291.2 769.2,291.2 770.0,290.8 770.8,290.0 771.6,288.6 772.4,287.8 773.1,289.5 773.8,292.0 774.5,293.2 775.3,292.3 776.2,290.7 777.0,289.8 778.0,290.4 779.0,291.6 780.0,292.2 780.8,292.2 781.5,291.9 782.3,291.2" fill="none" stroke="#00c4f0" stroke-width="2.3" stroke-linejoin="round" stroke-linecap="round" />
<polyline points="782.6,245.5 783.2,244.5 783.8,243.5" fill="none" stroke="#00c4f0" stroke-width="2.3" stroke-linejoin="round" stroke-linecap="round" />
<polyline points="784.2,228.5 784.9,227.7 785.5,227.5" fill="none" stroke="#00c4f0" stroke-width="2.3" stroke-linejoin="round" stroke-linecap="round" />
<polyline points="789.2,232.5 789.9,235.4" fill="none" stroke="#00c4f0" stroke-width="2.3" stroke-linejoin="round" stroke-linecap="round" />
<polyline points="790.6,240.6 791.3,243.5 792.1,241.4" fill="none" stroke="#00c4f0" stroke-width="2.3" stroke-linejoin="round" stroke-linecap="round" />
<polyline points="4.4,232.5 5.2,239.9" fill="none" stroke="#00c4f0" stroke-width="1.5" stroke-linejoin="round" stroke-linecap="round" stroke-linecap="butt"/>
<polyline points="7.0,240.4 8.0,236.4" fill="none" stroke="#00c4f0" stroke-width="1.5" stroke-linejoin="round" stroke-linecap="round" stroke-linecap="butt"/>
<polyline points="70.0,235.4 70.7,240.0" fill="none" stroke="#00c4f0" stroke-width="1.5" stroke-linejoin="round" stroke-linecap="round" stroke-linecap="butt"/>
<polyline points="71.4,242.4 72.4,236.2 73.4,229.9" fill="none" stroke="#00c4f0" stroke-width="1.5" stroke-linejoin="round" stroke-linecap="round" stroke-linecap="butt"/>
<polyline points="74.4,233.0 75.4,238.2" fill="none" stroke="#00c4f0" stroke-width="1.5" stroke-linejoin="round" stroke-linecap="round" stroke-linecap="butt"/>
<polyline points="77.4,239.1 78.4,235.1" fill="none" stroke="#00c4f0" stroke-width="1.5" stroke-linejoin="round" stroke-linecap="round" stroke-linecap="butt"/>
<polyline points="172.1,236.5 172.4,249.5" fill="none" stroke="#00c4f0" stroke-width="1.5" stroke-linejoin="round" stroke-linecap="round" stroke-linecap="butt"/>
<polyline points="173.2,251.5 173.7,297.6" fill="none" stroke="#00c4f0" stroke-width="1.5" stroke-linejoin="round" stroke-linecap="round" stroke-linecap="butt"/>
<polyline points="183.8,287.7 184.7,291.4" fill="none" stroke="#00c4f0" stroke-width="1.5" stroke-linejoin="round" stroke-linecap="round" stroke-linecap="butt"/>
<polyline points="186.3,292.1 187.2,288.3" fill="none" stroke="#00c4f0" stroke-width="1.5" stroke-linejoin="round" stroke-linecap="round" stroke-linecap="butt"/>
<polyline points="188.8,287.2 189.7,291.8" fill="none" stroke="#00c4f0" stroke-width="1.5" stroke-linejoin="round" stroke-linecap="round" stroke-linecap="butt"/>
<polyline points="191.3,291.6 192.2,288.0" fill="none" stroke="#00c4f0" stroke-width="1.5" stroke-linejoin="round" stroke-linecap="round" stroke-linecap="butt"/>
<polyline points="280.9,291.0 281.8,286.4" fill="none" stroke="#00c4f0" stroke-width="1.5" stroke-linejoin="round" stroke-linecap="round" stroke-linecap="butt"/>
<polyline points="283.5,287.2 284.2,293.1" fill="none" stroke="#00c4f0" stroke-width="1.5" stroke-linejoin="round" stroke-linecap="round" stroke-linecap="butt"/>
<polyline points="285.8,294.9 286.6,291.1 287.5,287.3" fill="none" stroke="#00c4f0" stroke-width="1.5" stroke-linejoin="round" stroke-linecap="round" stroke-linecap="butt"/>
<polyline points="289.1,287.1 289.9,290.8" fill="none" stroke="#00c4f0" stroke-width="1.5" stroke-linejoin="round" stroke-linecap="round" stroke-linecap="butt"/>
<polyline points="376.8,288.7 377.5,292.3" fill="none" stroke="#00c4f0" stroke-width="1.5" stroke-linejoin="round" stroke-linecap="round" stroke-linecap="butt"/>
<polyline points="387.3,294.2 387.5,241.5" fill="none" stroke="#00c4f0" stroke-width="1.5" stroke-linejoin="round" stroke-linecap="round" stroke-linecap="butt"/>
<polyline points="388.8,240.5 389.2,227.5" fill="none" stroke="#00c4f0" stroke-width="1.5" stroke-linejoin="round" stroke-linecap="round" stroke-linecap="butt"/>
<polyline points="390.5,226.5 391.2,230.1 392.0,236.9" fill="none" stroke="#00c4f0" stroke-width="1.5" stroke-linejoin="round" stroke-linecap="round" stroke-linecap="butt"/>
<polyline points="392.7,240.1 393.5,235.8 394.4,231.9" fill="none" stroke="#00c4f0" stroke-width="1.5" stroke-linejoin="round" stroke-linecap="round" stroke-linecap="butt"/>
<polyline points="395.3,233.9 396.1,237.5" fill="none" stroke="#00c4f0" stroke-width="1.5" stroke-linejoin="round" stroke-linecap="round" stroke-linecap="butt"/>
<polyline points="400.1,234.7 400.9,238.3" fill="none" stroke="#00c4f0" stroke-width="1.5" stroke-linejoin="round" stroke-linecap="round" stroke-linecap="butt"/>
<polyline points="470.0,235.0 470.7,240.0" fill="none" stroke="#00c4f0" stroke-width="1.5" stroke-linejoin="round" stroke-linecap="round" stroke-linecap="butt"/>
<polyline points="471.4,242.4 472.4,236.0 473.4,230.0" fill="none" stroke="#00c4f0" stroke-width="1.5" stroke-linejoin="round" stroke-linecap="round" stroke-linecap="butt"/>
<polyline points="474.4,232.9 475.4,238.3" fill="none" stroke="#00c4f0" stroke-width="1.5" stroke-linejoin="round" stroke-linecap="round" stroke-linecap="butt"/>
<polyline points="477.4,238.6 478.4,234.7" fill="none" stroke="#00c4f0" stroke-width="1.5" stroke-linejoin="round" stroke-linecap="round" stroke-linecap="butt"/>
<polyline points="567.9,236.9 568.8,279.1" fill="none" stroke="#00c4f0" stroke-width="1.5" stroke-linejoin="round" stroke-linecap="round" stroke-linecap="butt"/>
<polyline points="569.8,280.2 569.9,298.1 570.5,291.6 571.2,285.1 572.0,292.7 572.7,300.2 573.4,296.3 574.2,289.1 574.9,285.1" fill="none" stroke="#00c4f0" stroke-width="1.5" stroke-linejoin="round" stroke-linecap="round" stroke-linecap="butt"/>
<polyline points="581.0,292.7 581.9,288.4" fill="none" stroke="#00c4f0" stroke-width="1.5" stroke-linejoin="round" stroke-linecap="round" stroke-linecap="butt"/>
<polyline points="585.3,284.7 586.1,289.8" fill="none" stroke="#00c4f0" stroke-width="1.5" stroke-linejoin="round" stroke-linecap="round" stroke-linecap="butt"/>
<polyline points="676.3,287.8 677.0,293.1" fill="none" stroke="#00c4f0" stroke-width="1.5" stroke-linejoin="round" stroke-linecap="round" stroke-linecap="butt"/>
<polyline points="678.6,293.9 679.5,289.1" fill="none" stroke="#00c4f0" stroke-width="1.5" stroke-linejoin="round" stroke-linecap="round" stroke-linecap="butt"/>
<polyline points="782.3,291.2 782.6,245.5" fill="none" stroke="#00c4f0" stroke-width="1.5" stroke-linejoin="round" stroke-linecap="round" stroke-linecap="butt"/>
<polyline points="783.8,243.5 784.2,228.5" fill="none" stroke="#00c4f0" stroke-width="1.5" stroke-linejoin="round" stroke-linecap="round" stroke-linecap="butt"/>
<polyline points="785.5,227.5 786.5,234.6 787.5,242.1 788.4,237.1 789.2,232.5" fill="none" stroke="#00c4f0" stroke-width="1.5" stroke-linejoin="round" stroke-linecap="round" stroke-linecap="butt"/>
<polyline points="789.9,235.4 790.6,240.6" fill="none" stroke="#00c4f0" stroke-width="1.5" stroke-linejoin="round" stroke-linecap="round" stroke-linecap="butt"/>
<polyline points="792.1,241.4 793.0,235.5" fill="none" stroke="#00c4f0" stroke-width="1.5" stroke-linejoin="round" stroke-linecap="round" stroke-linecap="butt"/>
<polyline points="4.0,213.9 5.0,213.9 6.0,213.9 6.7,213.1 7.4,213.1 8.4,213.1 9.4,213.1 10.4,213.2 11.4,212.9 12.1,212.5 12.8,212.5 13.8,212.5 14.8,212.5 15.7,213.5 16.7,213.4 17.6,213.5 18.4,213.5 19.2,213.1 20.0,213.1 21.0,212.3 22.0,210.7 23.0,209.1 24.0,208.8 25.0,209.3 26.0,210.7 27.0,212.4 28.0,214.1 29.0,215.5 30.0,216.0 31.0,215.6 32.0,214.8 33.0,213.8 34.0,213.0 35.0,212.4 36.0,211.7 37.0,211.2 38.0,211.0 39.0,211.5 40.0,212.5 41.0,213.5 42.0,214.0 43.0,213.8 44.0,213.6 44.9,214.0 45.9,214.0 46.8,213.6 47.8,213.6 48.8,213.6 49.8,213.3 50.8,213.0 51.8,213.3 52.8,213.6 53.8,214.0 54.8,214.0 55.8,214.0 56.8,214.0 57.8,213.9 58.8,214.2 59.5,213.7 60.2,213.7 61.2,213.9 62.2,213.6 63.2,213.6 64.2,213.6 65.0,213.6 65.8,213.4 66.5,213.0 67.2,211.4 67.9,209.0 68.6,207.8 69.4,209.7" fill="none" stroke="#f4ea00" stroke-width="2.4" stroke-linejoin="round" stroke-linecap="round" />
<polyline points="70.2,214.2 71.0,216.6 71.8,214.1 72.7,211.6 73.5,212.4 74.3,214.7 75.2,217.0 76.0,219.3 76.8,220.1 77.8,219.2 78.7,216.8" fill="none" stroke="#f4ea00" stroke-width="2.4" stroke-linejoin="round" stroke-linecap="round" />
<polyline points="79.7,212.7 80.6,209.5 81.5,207.1 82.5,206.2 83.5,208.0 84.5,210.1 85.5,212.1 86.5,214.0 87.3,215.1 88.2,216.2 89.0,217.1 89.9,218.2 90.7,218.4 91.6,217.6 92.5,216.6 93.4,214.7 94.3,213.1 95.3,211.8 96.2,210.4 97.1,209.4 98.0,209.4 98.9,209.9 99.9,210.7 100.8,212.3 101.8,214.2 102.7,215.8 103.7,217.0 104.6,217.9 105.5,217.6 106.4,215.8 107.3,214.5 108.3,213.6 109.2,212.3 110.1,211.4 111.0,211.0 111.9,211.2 112.9,211.9 113.8,212.7 114.8,214.2 115.7,215.2 116.6,216.1 117.6,215.8 118.5,216.1 119.4,216.2 120.3,215.5 121.2,215.1 122.1,214.4 123.0,213.1 124.0,212.9 125.0,213.2 125.7,213.5 126.4,213.8 127.4,213.8 128.4,213.4 129.3,213.2 130.3,213.4 131.2,213.2 131.9,213.5 132.6,213.8 133.3,213.8 134.0,213.8 134.7,213.8 135.4,213.8 136.3,214.2 137.3,214.2 138.2,214.2 139.2,214.2 140.2,214.2 141.2,213.8 142.2,213.8 143.1,214.4 144.1,214.7 145.0,214.4 146.0,214.4 147.0,214.4 147.7,213.6 148.4,213.4 149.4,213.8 150.4,213.8 151.4,213.4 152.4,213.4 153.4,213.4 154.4,213.8 155.4,213.8 156.4,213.8 157.4,213.4 158.4,213.4 159.4,214.2 160.4,214.2 161.4,214.2 162.4,213.8 163.4,213.8 164.4,213.8 165.1,213.8 165.8,214.2 166.8,214.2 167.8,214.2 168.5,214.2 169.3,213.8 170.0,213.8 170.9,213.0 171.8,210.8 172.6,209.0 173.5,208.2" fill="none" stroke="#f4ea00" stroke-width="2.4" stroke-linejoin="round" stroke-linecap="round" />
<polyline points="175.5,216.1 176.5,213.1 177.5,210.2 178.3,212.6" fill="none" stroke="#f4ea00" stroke-width="2.4" stroke-linejoin="round" stroke-linecap="round" />
<polyline points="179.0,216.3 179.8,218.5 180.6,218.7 181.4,218.9 182.2,218.5 183.0,219.4 183.7,217.9 184.5,215.6 185.2,214.0 185.7,213.6" fill="none" stroke="#f4ea00" stroke-width="2.4" stroke-linejoin="round" stroke-linecap="round" />
<polyline points="186.5,166.4 187.2,165.0 188.0,163.4 188.8,161.0 189.5,158.4 190.3,155.5 191.2,152.8 192.0,151.5 193.0,152.1 194.0,153.4" fill="none" stroke="#f4ea00" stroke-width="2.4" stroke-linejoin="round" stroke-linecap="round" />
<polyline points="196.0,161.4 197.0,163.1 198.0,165.1 199.0,166.0 200.0,165.3 201.0,164.7 202.0,163.4 203.0,162.7 204.0,161.5 205.0,161.0 206.0,160.6 207.0,160.4 208.0,160.0 208.8,159.5 209.7,158.8 210.5,158.2 211.3,157.6 212.2,158.1 213.1,159.7 214.0,160.6 214.9,162.0 215.8,164.7 216.8,166.2 217.7,166.8 218.5,166.2 219.3,164.7 220.2,162.4 221.0,161.0 222.0,159.2 223.0,158.1 224.0,157.6 225.0,157.9 226.0,158.9 227.0,160.0 228.0,161.5 229.0,162.4 229.9,163.4 230.9,164.2 231.9,164.5 232.9,164.1 233.9,163.1 234.9,161.8 235.8,160.9 236.8,159.9 237.8,159.0 238.6,159.3 239.5,159.9 240.3,160.6 241.2,161.2 242.0,161.5 243.0,161.4 244.0,160.9 244.9,160.9 245.9,160.0 246.8,160.4 247.5,160.4 248.2,160.4 249.1,160.6 250.1,160.9 251.0,161.0 251.9,161.0 252.9,161.0 253.8,161.0 254.5,161.4 255.2,161.4 256.2,161.2 257.2,160.9 257.9,161.2 258.6,161.0 259.6,160.7 260.6,160.0 261.6,160.6 262.6,161.6 263.6,161.3 264.6,161.0 265.6,160.7 266.6,160.4 267.3,161.0 268.0,161.1 269.0,161.3 270.0,160.6 270.7,160.6 271.4,161.0 272.4,161.0 273.4,161.0 274.1,161.0 274.8,161.4 275.4,161.4 276.0,161.0 277.0,161.6 278.0,163.0 279.0,164.4 280.0,164.6 281.0,163.6 282.0,162.0 283.0,159.6 284.0,158.0 285.0,157.1 285.9,156.4 286.9,155.8 287.9,155.6 288.8,156.4 289.7,157.9 290.6,160.6 291.6,163.6 292.5,165.6 293.4,166.0 294.3,165.6 295.2,165.2 296.2,163.9 297.1,162.9 298.0,161.5 298.9,160.3 299.9,159.4 300.8,158.6 301.8,158.9 302.8,159.5 303.8,160.0 304.8,161.1 305.7,162.2 306.7,163.1 307.7,163.8 308.7,164.1 309.6,163.7 310.5,163.7 311.4,162.4 312.3,161.0 313.2,159.3 314.1,157.9 315.0,157.6 315.9,157.9 316.9,159.5 317.8,160.7 318.7,161.9 319.6,163.2 320.5,163.5 321.5,164.2 322.4,165.0 323.3,164.6 324.2,163.6 325.1,162.2 326.0,160.8 326.9,159.4 327.8,158.8 328.7,158.0 329.6,158.2 330.5,158.4 331.4,159.7 332.4,160.8 333.3,161.8 334.2,162.6 335.1,163.3 336.0,163.5 337.0,163.1 338.0,162.2 339.0,161.3 340.0,160.6 341.0,160.2 342.0,160.0 343.0,160.0 344.0,160.0 345.0,160.3 346.0,160.6 347.0,160.6 348.0,160.6 349.0,160.3 350.0,160.0 351.0,160.0 352.0,159.6 352.9,159.9 353.9,160.9 354.8,160.7 355.7,160.4 356.7,159.9 357.6,159.6 358.5,160.0 359.5,160.0 360.4,160.0 361.3,159.9 362.3,160.4 363.2,160.7 364.2,160.7 365.2,160.7 365.9,160.4 366.6,160.6 367.5,160.6 368.5,160.6 369.4,160.6 370.3,161.0 371.3,161.0 372.2,161.0 372.9,160.6 373.5,160.6 374.0,160.5" fill="none" stroke="#f4ea00" stroke-width="2.4" stroke-linejoin="round" stroke-linecap="round" />
<polyline points="374.2,174.3 374.8,175.2 375.3,176.0" fill="none" stroke="#f4ea00" stroke-width="2.4" stroke-linejoin="round" stroke-linecap="round" />
<polyline points="375.6,210.6 376.5,209.6 377.4,208.7 378.2,210.7" fill="none" stroke="#f4ea00" stroke-width="2.4" stroke-linejoin="round" stroke-linecap="round" />
<polyline points="380.9,222.2 381.8,225.5 382.7,226.0 383.5,223.8" fill="none" stroke="#f4ea00" stroke-width="2.4" stroke-linejoin="round" stroke-linecap="round" />
<polyline points="385.0,215.6 385.9,213.2 386.7,210.4 387.6,209.1 388.6,211.0 389.5,212.5 390.5,211.0 391.5,209.5 392.5,211.2 393.5,213.0 394.3,212.4 395.2,211.1 396.0,210.5 397.0,211.3 398.0,213.3 399.0,215.7 400.0,217.7 401.0,218.5 401.9,218.0 402.9,216.7 403.8,214.9 404.7,212.9 405.6,211.1 406.6,209.8 407.5,209.3 408.4,209.7 409.4,210.6 410.3,211.9 411.2,213.4 412.2,214.9 413.1,216.2 414.1,217.1 415.0,217.5 416.0,217.0 416.9,215.9 417.9,214.3 418.9,212.5 419.9,211.4 420.8,210.2 421.8,209.3 422.8,209.9 423.8,211.3 424.8,213.1 425.7,215.0 426.7,216.4 427.7,217.0 428.5,216.5 429.4,215.0 430.2,214.0 431.0,213.6 432.0,213.8 433.0,214.4 433.7,214.4 434.4,214.4 435.4,214.4 436.4,214.4 437.3,214.3 438.3,214.0 439.2,213.8 440.2,214.1 441.2,214.0 442.1,214.0 443.1,214.4 444.0,214.4 445.0,214.1 446.0,213.4 446.9,213.5 447.9,213.8 448.8,214.4 449.7,214.3 450.7,214.0 451.6,213.8 452.3,214.1 453.0,214.4 454.0,214.4 455.0,214.4 456.0,214.0 457.0,214.0 457.7,213.7 458.4,213.8 459.4,214.0 460.4,214.4 461.1,214.7 461.8,215.0 462.8,215.0 463.8,215.0 464.5,215.3 465.3,215.1 466.0,214.8 467.0,213.0 467.6,210.0 468.3,207.7" fill="none" stroke="#f4ea00" stroke-width="2.4" stroke-linejoin="round" stroke-linecap="round" />
<polyline points="470.0,217.9 471.0,215.7 472.0,213.0 472.8,214.8 473.6,218.1 474.4,219.9 475.3,219.2 476.2,217.5 477.1,214.8 478.0,212.2 478.9,210.4 479.8,208.7 480.7,208.0 481.7,208.4 482.7,209.5 483.7,211.0 484.6,212.7 485.6,214.5 486.6,216.0 487.6,217.1 488.6,217.5 489.5,217.7 490.5,216.9 491.4,215.8 492.3,214.5 493.3,212.7 494.2,211.4 495.1,210.3 496.1,209.1 497.0,208.9 497.9,209.3 498.8,210.8 499.7,212.3 500.6,214.0 501.5,215.5 502.4,216.6 503.3,217.0 504.3,216.5 505.3,215.2 506.2,213.5 507.2,211.8 508.2,210.5 509.2,210.4 510.2,210.8 511.1,211.5 512.1,212.7 513.1,213.5 514.1,214.8 515.0,215.5 516.0,216.2 517.0,216.6 518.0,216.3 519.0,216.5 520.0,215.5 521.0,214.0 522.0,213.0 523.0,212.3 524.0,212.0 525.0,212.4 526.0,213.3 527.0,214.2 528.0,214.2 529.0,214.1 530.0,214.1 531.0,214.1 532.0,214.5 533.0,214.8 534.0,215.1 535.0,214.5 536.0,213.9 536.7,214.2 537.4,214.5 538.3,214.1 539.3,214.1 540.2,214.1 541.2,214.1 542.2,214.5 542.9,214.5 543.6,214.5 544.6,214.7 545.6,214.4 546.5,213.5 547.5,213.5 548.4,213.9 549.4,214.2 550.4,214.9 551.3,215.2 552.3,215.4 553.2,215.1 554.2,214.8 555.2,214.5 556.2,214.8 557.2,215.1 558.2,214.5 559.2,213.9 560.1,214.2 561.1,215.2 562.0,215.5 563.0,215.3 564.0,214.5 565.0,214.2 566.0,213.9 566.5,214.2 567.0,214.5 567.8,214.1 568.5,213.0 569.1,209.9 569.7,207.3 570.5,210.2" fill="none" stroke="#f4ea00" stroke-width="2.4" stroke-linejoin="round" stroke-linecap="round" />
<polyline points="571.4,215.6 572.2,218.5 573.0,218.1 573.7,217.4 574.5,217.0 575.4,217.8 576.3,219.1 577.2,219.9 578.1,219.2 579.1,217.1 580.0,213.6" fill="none" stroke="#f4ea00" stroke-width="2.4" stroke-linejoin="round" stroke-linecap="round" />
<polyline points="586.2,150.8 587.0,149.0 587.8,150.5 588.7,153.8 589.5,157.0 590.4,159.5 591.3,162.8 592.1,165.9 593.0,168.1 593.9,169.4 594.9,168.9 595.8,167.7 596.8,166.1 597.8,164.1 598.8,162.7 599.8,160.4 600.8,158.0 601.7,155.9 602.7,154.7 603.7,154.1 604.6,154.9 605.6,156.9 606.5,158.6 607.4,161.6 608.3,164.2 609.3,166.6 610.2,167.4 611.1,166.6 612.0,165.5 612.9,164.0 613.8,162.4 614.7,161.1 615.6,159.6 616.5,158.6 617.4,158.2 618.4,158.5 619.4,159.2 620.4,160.3 621.4,161.6 622.3,163.0 623.3,164.3 624.3,165.4 625.3,166.6 626.3,166.8 627.3,166.3 628.3,164.8 629.2,163.0 630.2,160.2 631.2,158.7 632.2,158.2 633.2,158.5 634.1,159.7 635.1,160.8 636.1,161.9 637.0,162.7 638.0,163.0 639.0,162.9 640.0,162.9 641.0,162.4 642.0,161.3 642.9,161.1 643.9,160.0 644.9,159.5 645.9,159.1 646.9,159.0 647.9,159.3 648.9,160.0 649.8,161.4 650.8,162.4 651.8,163.2 652.8,163.0 653.6,162.7 654.5,162.1 655.3,161.4 656.2,160.8 657.0,160.5 658.0,161.0 659.0,161.5 660.0,161.2 661.0,160.9 661.7,161.7 662.4,161.9 663.1,161.9 663.8,161.9 664.7,161.6 665.7,161.9 666.6,162.1 667.3,161.8 668.0,161.5 669.0,161.9 669.9,162.9 670.9,164.2 671.8,165.5 672.8,166.5 673.7,166.9 674.7,165.6 675.7,163.6 676.7,161.0 677.7,158.8 678.7,156.7 679.7,155.5 680.6,156.1 681.6,157.6 682.5,159.8 683.5,162.1 684.4,164.3 685.4,165.8 686.3,166.9 687.3,166.5 688.2,165.4 689.2,163.8 690.1,161.9 691.1,160.1 692.1,158.5 693.0,157.4 694.0,157.0 695.0,157.3 695.9,158.2 696.9,159.0 697.9,160.4 698.8,162.3 699.8,163.5 700.7,164.8 701.7,165.1 702.7,164.6 703.7,162.8 704.7,161.1 705.6,159.4 706.6,158.0 707.6,157.5 708.5,157.8 709.4,158.7 710.3,159.9 711.2,161.7 712.2,163.1 713.1,163.8 714.0,164.7 714.9,165.0 715.8,164.7 716.7,163.9 717.6,162.8 718.5,161.9 719.3,160.7 720.2,159.5 721.1,158.8 722.0,158.0 723.0,158.3 724.0,158.6 725.0,159.7 726.0,160.9 727.0,162.4 728.0,163.2 729.0,163.5 730.0,163.1 731.0,162.7 732.0,161.8 733.0,160.6 734.0,161.4 735.0,161.4 736.0,161.7 737.0,162.0 738.0,161.7 739.0,161.4 739.9,160.6 740.9,160.6 741.8,160.6 742.7,160.7 743.7,161.4 744.6,161.6 745.5,161.5 746.5,160.8 747.4,161.0 748.1,161.1 748.8,160.9 749.7,161.0 750.7,161.3 751.6,161.4 752.6,161.4 753.6,161.4 754.5,161.4 755.5,161.4 756.4,161.4 757.3,161.4 758.3,161.4 759.2,161.4 759.9,160.7 760.6,160.4 761.6,160.3 762.6,160.6 763.5,160.6 764.5,160.6 765.4,160.6 766.0,160.6 766.9,159.8 767.8,158.8 768.7,158.0 769.6,161.0" fill="none" stroke="#f4ea00" stroke-width="2.4" stroke-linejoin="round" stroke-linecap="round" />
<polyline points="769.9,201.0 770.8,201.0 771.6,201.0" fill="none" stroke="#f4ea00" stroke-width="2.4" stroke-linejoin="round" stroke-linecap="round" />
<polyline points="772.0,213.0 772.8,210.5 773.5,208.0" fill="none" stroke="#f4ea00" stroke-width="2.4" stroke-linejoin="round" stroke-linecap="round" />
<polyline points="776.4,225.8 777.3,224.2 778.1,220.7 779.0,218.4 780.0,216.0 781.0,213.4" fill="none" stroke="#f4ea00" stroke-width="2.4" stroke-linejoin="round" stroke-linecap="round" />
<polyline points="782.0,208.6 783.0,206.1 783.7,207.9 784.5,211.2 785.2,213.9 785.9,211.7" fill="none" stroke="#f4ea00" stroke-width="2.4" stroke-linejoin="round" stroke-linecap="round" />
<polyline points="786.7,207.7 787.4,204.6 788.3,205.9 789.1,208.9 790.0,211.6 791.0,214.1 792.0,216.0 793.0,217.5" fill="none" stroke="#f4ea00" stroke-width="2.4" stroke-linejoin="round" stroke-linecap="round" />
<polyline points="69.4,209.7 70.2,214.2" fill="none" stroke="#f4ea00" stroke-width="1.5" stroke-linejoin="round" stroke-linecap="round" stroke-linecap="butt"/>
<polyline points="78.7,216.8 79.7,212.7" fill="none" stroke="#f4ea00" stroke-width="1.5" stroke-linejoin="round" stroke-linecap="round" stroke-linecap="butt"/>
<polyline points="173.5,208.2 174.5,212.2 175.5,216.1" fill="none" stroke="#f4ea00" stroke-width="1.5" stroke-linejoin="round" stroke-linecap="round" stroke-linecap="butt"/>
<polyline points="178.3,212.6 179.0,216.3" fill="none" stroke="#f4ea00" stroke-width="1.5" stroke-linejoin="round" stroke-linecap="round" stroke-linecap="butt"/>
<polyline points="185.7,213.6 185.9,170.0 186.5,166.4" fill="none" stroke="#f4ea00" stroke-width="1.5" stroke-linejoin="round" stroke-linecap="round" stroke-linecap="butt"/>
<polyline points="194.0,153.4 195.0,157.2 196.0,161.4" fill="none" stroke="#f4ea00" stroke-width="1.5" stroke-linejoin="round" stroke-linecap="round" stroke-linecap="butt"/>
<polyline points="374.0,160.5 374.2,174.3" fill="none" stroke="#f4ea00" stroke-width="1.5" stroke-linejoin="round" stroke-linecap="round" stroke-linecap="butt"/>
<polyline points="375.3,176.0 375.6,210.6" fill="none" stroke="#f4ea00" stroke-width="1.5" stroke-linejoin="round" stroke-linecap="round" stroke-linecap="butt"/>
<polyline points="378.2,210.7 379.0,214.4 379.9,218.1 380.9,222.2" fill="none" stroke="#f4ea00" stroke-width="1.5" stroke-linejoin="round" stroke-linecap="round" stroke-linecap="butt"/>
<polyline points="383.5,223.8 384.2,219.4 385.0,215.6" fill="none" stroke="#f4ea00" stroke-width="1.5" stroke-linejoin="round" stroke-linecap="round" stroke-linecap="butt"/>
<polyline points="468.3,207.7 469.1,212.6 470.0,217.9" fill="none" stroke="#f4ea00" stroke-width="1.5" stroke-linejoin="round" stroke-linecap="round" stroke-linecap="butt"/>
<polyline points="570.5,210.2 571.4,215.6" fill="none" stroke="#f4ea00" stroke-width="1.5" stroke-linejoin="round" stroke-linecap="round" stroke-linecap="butt"/>
<polyline points="580.0,213.6 580.6,206.4 581.3,189.6 581.7,159.6 582.4,164.8 583.0,170.4 583.8,166.2 584.5,160.0 585.3,155.1 586.2,150.8" fill="none" stroke="#f4ea00" stroke-width="1.5" stroke-linejoin="round" stroke-linecap="round" stroke-linecap="butt"/>
<polyline points="769.6,161.0 769.9,201.0" fill="none" stroke="#f4ea00" stroke-width="1.5" stroke-linejoin="round" stroke-linecap="round" stroke-linecap="butt"/>
<polyline points="771.6,201.0 772.0,213.0" fill="none" stroke="#f4ea00" stroke-width="1.5" stroke-linejoin="round" stroke-linecap="round" stroke-linecap="butt"/>
<polyline points="773.5,208.0 774.5,212.3 775.4,221.0 776.4,225.8" fill="none" stroke="#f4ea00" stroke-width="1.5" stroke-linejoin="round" stroke-linecap="round" stroke-linecap="butt"/>
<polyline points="781.0,213.4 782.0,208.6" fill="none" stroke="#f4ea00" stroke-width="1.5" stroke-linejoin="round" stroke-linecap="round" stroke-linecap="butt"/>
<polyline points="785.9,211.7 786.7,207.7" fill="none" stroke="#f4ea00" stroke-width="1.5" stroke-linejoin="round" stroke-linecap="round" stroke-linecap="butt"/>
</g>
<path d="M782,196.8 L788.6,192 V195.8 H793.6 V197.8 H788.6 V201.6 Z" fill="#a89c2c"/>
<path d="M3.3,212.7 H19.7 L25.5,219.8 L19.7,226.8 H3.3 Z" fill="#b3a837" stroke="#b3a837" stroke-width="1"/>
<text x="6.10" y="223.85" font-size="11.3" fill="#1d1b08" text-anchor="start"  stroke="#1d1b08" stroke-width="0.2" textLength="9.4" lengthAdjust="spacingAndGlyphs">C1</text>
<text x="35.10" y="223.60" font-size="10.3" fill="#aea31e" text-anchor="start"  stroke="#aea31e" stroke-width="0.15" textLength="8.3" lengthAdjust="spacingAndGlyphs">d1</text>
<path d="M3.5,288.4 H19.9 L25.7,295.5 L19.9,302.6 H3.5 Z" fill="#000" stroke="#0a9cba" stroke-width="1"/>
<text x="6.30" y="299.60" font-size="11.3" fill="#12b4d6" text-anchor="start"  stroke="#12b4d6" stroke-width="0.2" textLength="9.4" lengthAdjust="spacingAndGlyphs">C2</text>
<rect x="33.80" y="289.00" width="27.40" height="12.00" fill="#000" />
<text x="35.10" y="299.60" font-size="10.3" fill="#1fb4d6" text-anchor="start"  stroke="#1fb4d6" stroke-width="0.15" textLength="25.2" lengthAdjust="spacingAndGlyphs">debug</text>
<path d="M3.5,362.2 H19.9 L25.7,369.3 L19.9,376.4 H3.5 Z" fill="#000" stroke="#c8507a" stroke-width="1"/>
<text x="6.30" y="373.40" font-size="11.3" fill="#d05a84" text-anchor="start"  stroke="#d05a84" stroke-width="0.2" textLength="9.4" lengthAdjust="spacingAndGlyphs">C3</text>
<path d="M3.5,429.4 H19.9 L25.7,436.5 L19.9,443.6 H3.5 Z" fill="#000" stroke="#8fbc00" stroke-width="1"/>
<text x="6.30" y="440.60" font-size="11.3" fill="#9ccc00" text-anchor="start"  stroke="#9ccc00" stroke-width="0.2" textLength="9.4" lengthAdjust="spacingAndGlyphs">C4</text>
<path d="M6.2,143.1 H16.6 V153 H6.2 V150.2 L2.9,148 L6.2,145.8 Z" fill="#1f2236" stroke="#e8861e" stroke-width="1.3" stroke-linejoin="round"/>
<path d="M9.4,146.1 H13.5 M11.45,146.1 V151.6" stroke="#f0902a" stroke-width="1.25" fill="none"/>
<rect x="46.80" y="139.00" width="83.60" height="10.80" fill="#30364c" rx="3.5" />
<text x="50.20" y="148.20" font-size="9.7" fill="#dfe2ea" text-anchor="start"  stroke="#dfe2ea" stroke-width="0.35" textLength="8.3" lengthAdjust="spacingAndGlyphs">V:</text>
<text x="68.20" y="148.20" font-size="9.7" fill="#dfe2ea" text-anchor="start"  stroke="#dfe2ea" stroke-width="0.35" textLength="23.5" lengthAdjust="spacingAndGlyphs">3.480</text>
<text x="96.20" y="148.20" font-size="9.7" fill="#dfe2ea" text-anchor="start"  stroke="#dfe2ea" stroke-width="0.35" textLength="5.2" lengthAdjust="spacingAndGlyphs">V</text>
<rect x="46.80" y="155.30" width="102.90" height="22.20" fill="#30364c" rx="4" />
<text x="50.20" y="163.60" font-size="9.7" fill="#dfe2ea" text-anchor="start"  stroke="#dfe2ea" stroke-width="0.35" textLength="15.9" lengthAdjust="spacingAndGlyphs">ΔV:</text>
<text x="85.00" y="163.60" font-size="9.7" fill="#dfe2ea" text-anchor="start"  stroke="#dfe2ea" stroke-width="0.35" textLength="21.9" lengthAdjust="spacingAndGlyphs">1.600</text>
<text x="111.00" y="163.60" font-size="9.7" fill="#dfe2ea" text-anchor="start"  stroke="#dfe2ea" stroke-width="0.35" textLength="5.1" lengthAdjust="spacingAndGlyphs">V</text>
<text x="50.20" y="175.10" font-size="9.7" fill="#dfe2ea" text-anchor="start"  stroke="#dfe2ea" stroke-width="0.35" textLength="31.1" lengthAdjust="spacingAndGlyphs">ΔV/Δt:</text>
<rect x="46.80" y="183.40" width="83.60" height="10.50" fill="#30364c" rx="3.5" />
<text x="50.20" y="191.80" font-size="9.7" fill="#dfe2ea" text-anchor="start"  stroke="#dfe2ea" stroke-width="0.35" textLength="8.3" lengthAdjust="spacingAndGlyphs">V:</text>
<text x="68.20" y="191.80" font-size="9.7" fill="#dfe2ea" text-anchor="start"  stroke="#dfe2ea" stroke-width="0.35" textLength="22.8" lengthAdjust="spacingAndGlyphs">1.880</text>
<text x="95.10" y="191.80" font-size="9.7" fill="#dfe2ea" text-anchor="start"  stroke="#dfe2ea" stroke-width="0.35" textLength="4.9" lengthAdjust="spacingAndGlyphs">V</text>
<rect x="304.80" y="384.10" width="83.00" height="11.10" fill="#30364c" rx="3.5" />
<text x="308.00" y="392.80" font-size="9.7" fill="#dfe2ea" text-anchor="start"  stroke="#dfe2ea" stroke-width="0.35" textLength="5.8" lengthAdjust="spacingAndGlyphs">t:</text>
<text x="326.00" y="392.80" font-size="9.7" fill="#dfe2ea" text-anchor="start"  stroke="#dfe2ea" stroke-width="0.35" textLength="22.4" lengthAdjust="spacingAndGlyphs">440.1</text>
<text x="351.80" y="392.80" font-size="9.7" fill="#dfe2ea" text-anchor="start"  stroke="#dfe2ea" stroke-width="0.35" textLength="8.3" lengthAdjust="spacingAndGlyphs">µs</text>
<rect x="432.70" y="384.10" width="91.00" height="22.10" fill="#30364c" rx="4" />
<text x="435.90" y="393.00" font-size="9.7" fill="#dfe2ea" text-anchor="start"  stroke="#dfe2ea" stroke-width="0.35" textLength="13.4" lengthAdjust="spacingAndGlyphs">Δt:</text>
<text x="461.40" y="393.00" font-size="9.7" fill="#dfe2ea" text-anchor="start"  stroke="#dfe2ea" stroke-width="0.35" textLength="23.1" lengthAdjust="spacingAndGlyphs">454.0</text>
<text x="489.50" y="393.00" font-size="9.7" fill="#dfe2ea" text-anchor="start"  stroke="#dfe2ea" stroke-width="0.35" textLength="8.1" lengthAdjust="spacingAndGlyphs">ns</text>
<text x="435.90" y="404.10" font-size="9.7" fill="#dfe2ea" text-anchor="start"  stroke="#dfe2ea" stroke-width="0.35" textLength="20.5" lengthAdjust="spacingAndGlyphs">1/Δt:</text>
<text x="461.40" y="404.10" font-size="9.7" fill="#dfe2ea" text-anchor="start"  stroke="#dfe2ea" stroke-width="0.35" textLength="23.1" lengthAdjust="spacingAndGlyphs">2.203</text>
<text x="488.50" y="404.10" font-size="9.7" fill="#dfe2ea" text-anchor="start"  stroke="#dfe2ea" stroke-width="0.35" textLength="17.7" lengthAdjust="spacingAndGlyphs">MHz</text>
<rect x="569.40" y="384.10" width="82.50" height="11.10" fill="#30364c" rx="3.5" />
<text x="572.20" y="392.80" font-size="9.7" fill="#dfe2ea" text-anchor="start"  stroke="#dfe2ea" stroke-width="0.35" textLength="5.8" lengthAdjust="spacingAndGlyphs">t:</text>
<text x="589.80" y="392.80" font-size="9.7" fill="#dfe2ea" text-anchor="start"  stroke="#dfe2ea" stroke-width="0.35" textLength="22.8" lengthAdjust="spacingAndGlyphs">440.6</text>
<text x="616.40" y="392.80" font-size="9.7" fill="#dfe2ea" text-anchor="start"  stroke="#dfe2ea" stroke-width="0.35" textLength="9.8" lengthAdjust="spacingAndGlyphs">µs</text>
<rect x="385.10" y="147.30" width="6.80" height="7.30" fill="none" stroke="#6e6418" stroke-width="0.9"/>
<circle cx="568.5" cy="182.4" r="3.3" fill="none" stroke="#7a6f1a" stroke-width="0.9"/>
<circle cx="396.5" cy="144.5" r="6.6" fill="#2a8ce0"/>
<text x="396.60" y="148.10" font-size="11.6" fill="#ffffff" text-anchor="middle" stroke="#fff" stroke-width="0.45">A</text>
<circle cx="559.9" cy="144.5" r="6.6" fill="#2a8ce0"/>
<text x="560.20" y="148.10" font-size="11.6" fill="#ffffff" text-anchor="middle" stroke="#fff" stroke-width="0.45">B</text>
<path d="M364.7,254.2 V260.6 L366.5,259.8 L367.5,262 L368.7,261.5 L367.8,259.2 L369.3,258.5 Z" fill="#000" stroke="#5e666e" stroke-width="0.9" stroke-linejoin="round"/>
<rect x="2.6" y="456.3" width="62.4" height="48.39999999999998" rx="3.6" fill="#a5b3db" stroke="#272c40" stroke-width="1"/>
<path d="M3.1,468.6 V460.1 a3.3,3.3 0 0 1 3.3,-3.3 H61.2 a3.3,3.3 0 0 1 3.3,3.3 V468.6 Z" fill="#aca835"/>
<text x="6.30" y="465.90" font-size="10" fill="#1c1a06" text-anchor="start"  stroke="#1c1a06" stroke-width="0.35" textLength="10.7" lengthAdjust="spacingAndGlyphs">Ch</text>
<text x="20.20" y="465.90" font-size="10" fill="#1c1a06" text-anchor="start"  stroke="#1c1a06" stroke-width="0.35" textLength="3.3" lengthAdjust="spacingAndGlyphs">1</text>
<text x="7.90" y="478.20" font-size="10.0" fill="#15161d" text-anchor="start"  stroke="#15161d" stroke-width="0.35" textLength="18.0" lengthAdjust="spacingAndGlyphs">2.00</text>
<text x="31.00" y="478.20" font-size="10.0" fill="#15161d" text-anchor="start"  stroke="#15161d" stroke-width="0.35" textLength="10.6" lengthAdjust="spacingAndGlyphs">V/</text>
<text x="41.50" y="478.30" font-size="8.2" fill="#15161d" text-anchor="start" stroke="#15161d" stroke-width="0.25">格</text>
<path d="M8.7,488 v-1.2 a3.5,3.4 0 0 1 7,0 v1.2" fill="none" stroke="#2b2e3e" stroke-width="1.2"/>
<rect x="7.6" y="486.8" width="2.3" height="2.8" fill="#c9d0e6" stroke="#3a3e50" stroke-width="0.6"/><rect x="14.5" y="486.8" width="2.3" height="2.8" fill="#c9d0e6" stroke="#3a3e50" stroke-width="0.6"/>
<text x="7.90" y="500.60" font-size="10.0" fill="#15161d" text-anchor="start"  stroke="#15161d" stroke-width="0.35" textLength="13.3" lengthAdjust="spacingAndGlyphs">100</text>
<text x="26.30" y="500.60" font-size="10.0" fill="#15161d" text-anchor="start"  stroke="#15161d" stroke-width="0.35" textLength="17.7" lengthAdjust="spacingAndGlyphs">MHz</text>
<rect x="68.8" y="456.3" width="62.4" height="48.39999999999998" rx="3.6" fill="#a5b3db" stroke="#272c40" stroke-width="1"/>
<path d="M69.3,468.6 V460.1 a3.3,3.3 0 0 1 3.3,-3.3 H127.39999999999999 a3.3,3.3 0 0 1 3.3,3.3 V468.6 Z" fill="#0b3f4e"/>
<text x="72.50" y="465.90" font-size="10" fill="#1fb6d8" text-anchor="start"  stroke="#1fb6d8" stroke-width="0.35" textLength="10.7" lengthAdjust="spacingAndGlyphs">Ch</text>
<text x="86.40" y="465.90" font-size="10" fill="#1fb6d8" text-anchor="start"  stroke="#1fb6d8" stroke-width="0.35" textLength="3.3" lengthAdjust="spacingAndGlyphs">2</text>
<text x="74.10" y="478.20" font-size="10.0" fill="#15161d" text-anchor="start"  stroke="#15161d" stroke-width="0.35" textLength="18.0" lengthAdjust="spacingAndGlyphs">2.00</text>
<text x="97.20" y="478.20" font-size="10.0" fill="#15161d" text-anchor="start"  stroke="#15161d" stroke-width="0.35" textLength="10.6" lengthAdjust="spacingAndGlyphs">V/</text>
<text x="107.70" y="478.30" font-size="8.2" fill="#15161d" text-anchor="start" stroke="#15161d" stroke-width="0.25">格</text>
<path d="M74.89999999999999,488 v-1.2 a3.5,3.4 0 0 1 7,0 v1.2" fill="none" stroke="#2b2e3e" stroke-width="1.2"/>
<rect x="73.8" y="486.8" width="2.3" height="2.8" fill="#c9d0e6" stroke="#3a3e50" stroke-width="0.6"/><rect x="80.7" y="486.8" width="2.3" height="2.8" fill="#c9d0e6" stroke="#3a3e50" stroke-width="0.6"/>
<text x="74.10" y="500.60" font-size="10.0" fill="#15161d" text-anchor="start"  stroke="#15161d" stroke-width="0.35" textLength="13.3" lengthAdjust="spacingAndGlyphs">100</text>
<text x="92.50" y="500.60" font-size="10.0" fill="#15161d" text-anchor="start"  stroke="#15161d" stroke-width="0.35" textLength="17.7" lengthAdjust="spacingAndGlyphs">MHz</text>
<rect x="134.9" y="456.3" width="62.4" height="48.39999999999998" rx="3.6" fill="#a5b3db" stroke="#272c40" stroke-width="1"/>
<path d="M135.4,468.6 V460.1 a3.3,3.3 0 0 1 3.3,-3.3 H193.5 a3.3,3.3 0 0 1 3.3,3.3 V468.6 Z" fill="#5b2138"/>
<text x="138.60" y="465.90" font-size="10" fill="#de4f82" text-anchor="start"  stroke="#de4f82" stroke-width="0.35" textLength="10.7" lengthAdjust="spacingAndGlyphs">Ch</text>
<text x="152.50" y="465.90" font-size="10" fill="#de4f82" text-anchor="start"  stroke="#de4f82" stroke-width="0.35" textLength="3.3" lengthAdjust="spacingAndGlyphs">3</text>
<text x="140.20" y="478.20" font-size="10.0" fill="#15161d" text-anchor="start"  stroke="#15161d" stroke-width="0.35" textLength="18.0" lengthAdjust="spacingAndGlyphs">2.00</text>
<text x="163.30" y="478.20" font-size="10.0" fill="#15161d" text-anchor="start"  stroke="#15161d" stroke-width="0.35" textLength="10.6" lengthAdjust="spacingAndGlyphs">V/</text>
<text x="173.80" y="478.30" font-size="8.2" fill="#15161d" text-anchor="start" stroke="#15161d" stroke-width="0.25">格</text>
<path d="M141.0,488 v-1.2 a3.5,3.4 0 0 1 7,0 v1.2" fill="none" stroke="#2b2e3e" stroke-width="1.2"/>
<rect x="139.9" y="486.8" width="2.3" height="2.8" fill="#c9d0e6" stroke="#3a3e50" stroke-width="0.6"/><rect x="146.8" y="486.8" width="2.3" height="2.8" fill="#c9d0e6" stroke="#3a3e50" stroke-width="0.6"/>
<text x="140.20" y="500.60" font-size="10.0" fill="#15161d" text-anchor="start"  stroke="#15161d" stroke-width="0.35" textLength="13.3" lengthAdjust="spacingAndGlyphs">100</text>
<text x="158.60" y="500.60" font-size="10.0" fill="#15161d" text-anchor="start"  stroke="#15161d" stroke-width="0.35" textLength="17.7" lengthAdjust="spacingAndGlyphs">MHz</text>
<rect x="201.1" y="456.3" width="62.4" height="48.39999999999998" rx="3.6" fill="#a5b3db" stroke="#272c40" stroke-width="1"/>
<path d="M201.6,468.6 V460.1 a3.3,3.3 0 0 1 3.3,-3.3 H259.7 a3.3,3.3 0 0 1 3.3,3.3 V468.6 Z" fill="#515b52"/>
<text x="204.80" y="465.90" font-size="10" fill="#9fd010" text-anchor="start"  stroke="#9fd010" stroke-width="0.35" textLength="10.7" lengthAdjust="spacingAndGlyphs">Ch</text>
<text x="218.70" y="465.90" font-size="10" fill="#9fd010" text-anchor="start"  stroke="#9fd010" stroke-width="0.35" textLength="3.3" lengthAdjust="spacingAndGlyphs">4</text>
<text x="206.40" y="478.20" font-size="10.0" fill="#15161d" text-anchor="start"  stroke="#15161d" stroke-width="0.35" textLength="18.0" lengthAdjust="spacingAndGlyphs">2.00</text>
<text x="229.50" y="478.20" font-size="10.0" fill="#15161d" text-anchor="start"  stroke="#15161d" stroke-width="0.35" textLength="10.6" lengthAdjust="spacingAndGlyphs">V/</text>
<text x="240.00" y="478.30" font-size="8.2" fill="#15161d" text-anchor="start" stroke="#15161d" stroke-width="0.25">格</text>
<path d="M207.2,488 v-1.2 a3.5,3.4 0 0 1 7,0 v1.2" fill="none" stroke="#2b2e3e" stroke-width="1.2"/>
<rect x="206.1" y="486.8" width="2.3" height="2.8" fill="#c9d0e6" stroke="#3a3e50" stroke-width="0.6"/><rect x="213.0" y="486.8" width="2.3" height="2.8" fill="#c9d0e6" stroke="#3a3e50" stroke-width="0.6"/>
<text x="206.40" y="500.60" font-size="10.0" fill="#15161d" text-anchor="start"  stroke="#15161d" stroke-width="0.35" textLength="13.3" lengthAdjust="spacingAndGlyphs">100</text>
<text x="224.80" y="500.60" font-size="10.0" fill="#15161d" text-anchor="start"  stroke="#15161d" stroke-width="0.35" textLength="17.7" lengthAdjust="spacingAndGlyphs">MHz</text>
<rect x="550.20" y="456.40" width="27.60" height="48.30" fill="#33384d" rx="3.6" stroke="#535a72" stroke-width="1"/>
<text x="556.20" y="471.90" font-size="8.6" fill="#b3bedb" text-anchor="start" stroke="#b3bedb" stroke-width="0.25" textLength="17.2" lengthAdjust="spacingAndGlyphs">数学</text>
<text x="556.20" y="484.20" font-size="8.6" fill="#b3bedb" text-anchor="start" stroke="#b3bedb" stroke-width="0.25" textLength="17.2" lengthAdjust="spacingAndGlyphs">参考</text>
<text x="556.20" y="495.80" font-size="8.6" fill="#b3bedb" text-anchor="start" stroke="#b3bedb" stroke-width="0.25" textLength="17.2" lengthAdjust="spacingAndGlyphs">总线</text>
<rect x="583.7" y="456.3" width="67.2" height="48.39999999999998" rx="3.6" fill="#a5b3db" stroke="#272c40" stroke-width="1"/>
<path d="M584.2,468.6 V460.1 a3.3,3.3 0 0 1 3.3,-3.3 H647.1000000000001 a3.3,3.3 0 0 1 3.3,3.3 V468.6 Z" fill="#435070"/>
<text x="588.00" y="465.80" font-size="8.5" fill="#cdd4ea" text-anchor="start" stroke="#cdd4ea" stroke-width="0.25" textLength="17" lengthAdjust="spacingAndGlyphs">水平</text>
<text x="589.30" y="477.90" font-size="10.0" fill="#15161d" text-anchor="start"  stroke="#15161d" stroke-width="0.35" textLength="16.0" lengthAdjust="spacingAndGlyphs">400</text>
<text x="609.20" y="477.90" font-size="10.0" fill="#15161d" text-anchor="start"  stroke="#15161d" stroke-width="0.35" textLength="13.8" lengthAdjust="spacingAndGlyphs">µs/</text>
<text x="622.90" y="478.00" font-size="8.2" fill="#15161d" text-anchor="start" stroke="#15161d" stroke-width="0.25">格</text>
<text x="589.30" y="489.50" font-size="10.0" fill="#15161d" text-anchor="start"  stroke="#15161d" stroke-width="0.35" textLength="11.4" lengthAdjust="spacingAndGlyphs">SR:</text>
<text x="603.90" y="489.50" font-size="10.0" fill="#15161d" text-anchor="start"  stroke="#15161d" stroke-width="0.35" textLength="16.9" lengthAdjust="spacingAndGlyphs">2.50</text>
<text x="625.80" y="489.50" font-size="10.0" fill="#15161d" text-anchor="start"  stroke="#15161d" stroke-width="0.35" textLength="6.2" lengthAdjust="spacingAndGlyphs">...</text>
<text x="589.30" y="500.70" font-size="10.0" fill="#15161d" text-anchor="start"  stroke="#15161d" stroke-width="0.35" textLength="11.1" lengthAdjust="spacingAndGlyphs">RL:</text>
<text x="604.20" y="500.70" font-size="10.0" fill="#15161d" text-anchor="start"  stroke="#15161d" stroke-width="0.35" textLength="7.4" lengthAdjust="spacingAndGlyphs">10</text>
<text x="616.10" y="500.70" font-size="10.0" fill="#15161d" text-anchor="start"  stroke="#15161d" stroke-width="0.35" textLength="21.7" lengthAdjust="spacingAndGlyphs">Mpts</text>
<rect x="656.7" y="456.3" width="67.3" height="48.39999999999998" rx="3.6" fill="#a5b3db" stroke="#272c40" stroke-width="1"/>
<path d="M657.2,468.6 V460.1 a3.3,3.3 0 0 1 3.3,-3.3 H720.2 a3.3,3.3 0 0 1 3.3,3.3 V468.6 Z" fill="#435070"/>
<text x="660.90" y="466.00" font-size="8.7" fill="#cdd4ea" text-anchor="start" stroke="#cdd4ea" stroke-width="0.25" textLength="17.4" lengthAdjust="spacingAndGlyphs">触发</text>
<rect x="703.70" y="458.80" width="15.20" height="8.50" fill="#c0b72b" />
<text x="709.60" y="465.80" font-size="9.4" fill="#15161d" text-anchor="start"  stroke="#15161d" stroke-width="0.35" textLength="3.0" lengthAdjust="spacingAndGlyphs">1</text>
<path d="M662.3,472.6 h2.4 c2.2,0 3.6,5.9 5.8,5.9 h2.6 M662.3,478.5 h2.4 c2.2,0 3.6,-5.9 5.8,-5.9 h2.6" fill="none" stroke="#15161d" stroke-width="1.1"/>
<text x="692.20" y="478.20" font-size="10.0" fill="#15161d" text-anchor="start"  stroke="#15161d" stroke-width="0.35" textLength="17.0" lengthAdjust="spacingAndGlyphs">1.20</text>
<text x="713.20" y="478.20" font-size="10.0" fill="#15161d" text-anchor="start"  stroke="#15161d" stroke-width="0.35" textLength="5.3" lengthAdjust="spacingAndGlyphs">V</text>
<rect x="730" y="456.3" width="80" height="48.39999999999998" rx="3.6" fill="#a5b3db" stroke="#272c40" stroke-width="1"/>
<path d="M730.5,468.6 V460.1 a3.3,3.3 0 0 1 3.3,-3.3 H806.2 a3.3,3.3 0 0 1 3.3,3.3 V468.6 Z" fill="#435070"/>
<text x="734.00" y="465.80" font-size="8.5" fill="#cdd4ea" text-anchor="start" stroke="#cdd4ea" stroke-width="0.25" textLength="17" lengthAdjust="spacingAndGlyphs">采集</text>
<text x="735.40" y="477.80" font-size="8.72" fill="#15161d" text-anchor="start" stroke="#15161d" stroke-width="0.25" textLength="34.9" lengthAdjust="spacingAndGlyphs">高分辨率</text>
<text x="735.40" y="489.20" font-size="8.72" fill="#15161d" text-anchor="start" stroke="#15161d" stroke-width="0.25" textLength="17.4" lengthAdjust="spacingAndGlyphs">单次</text>
<text x="753.40" y="489.40" font-size="10.0" fill="#15161d" text-anchor="start"  stroke="#15161d" stroke-width="0.35" textLength="1.9" lengthAdjust="spacingAndGlyphs">:</text>
<text x="759.00" y="489.40" font-size="10.0" fill="#15161d" text-anchor="start"  stroke="#15161d" stroke-width="0.35" textLength="10.4" lengthAdjust="spacingAndGlyphs">1/1</text></svg></body></html>
